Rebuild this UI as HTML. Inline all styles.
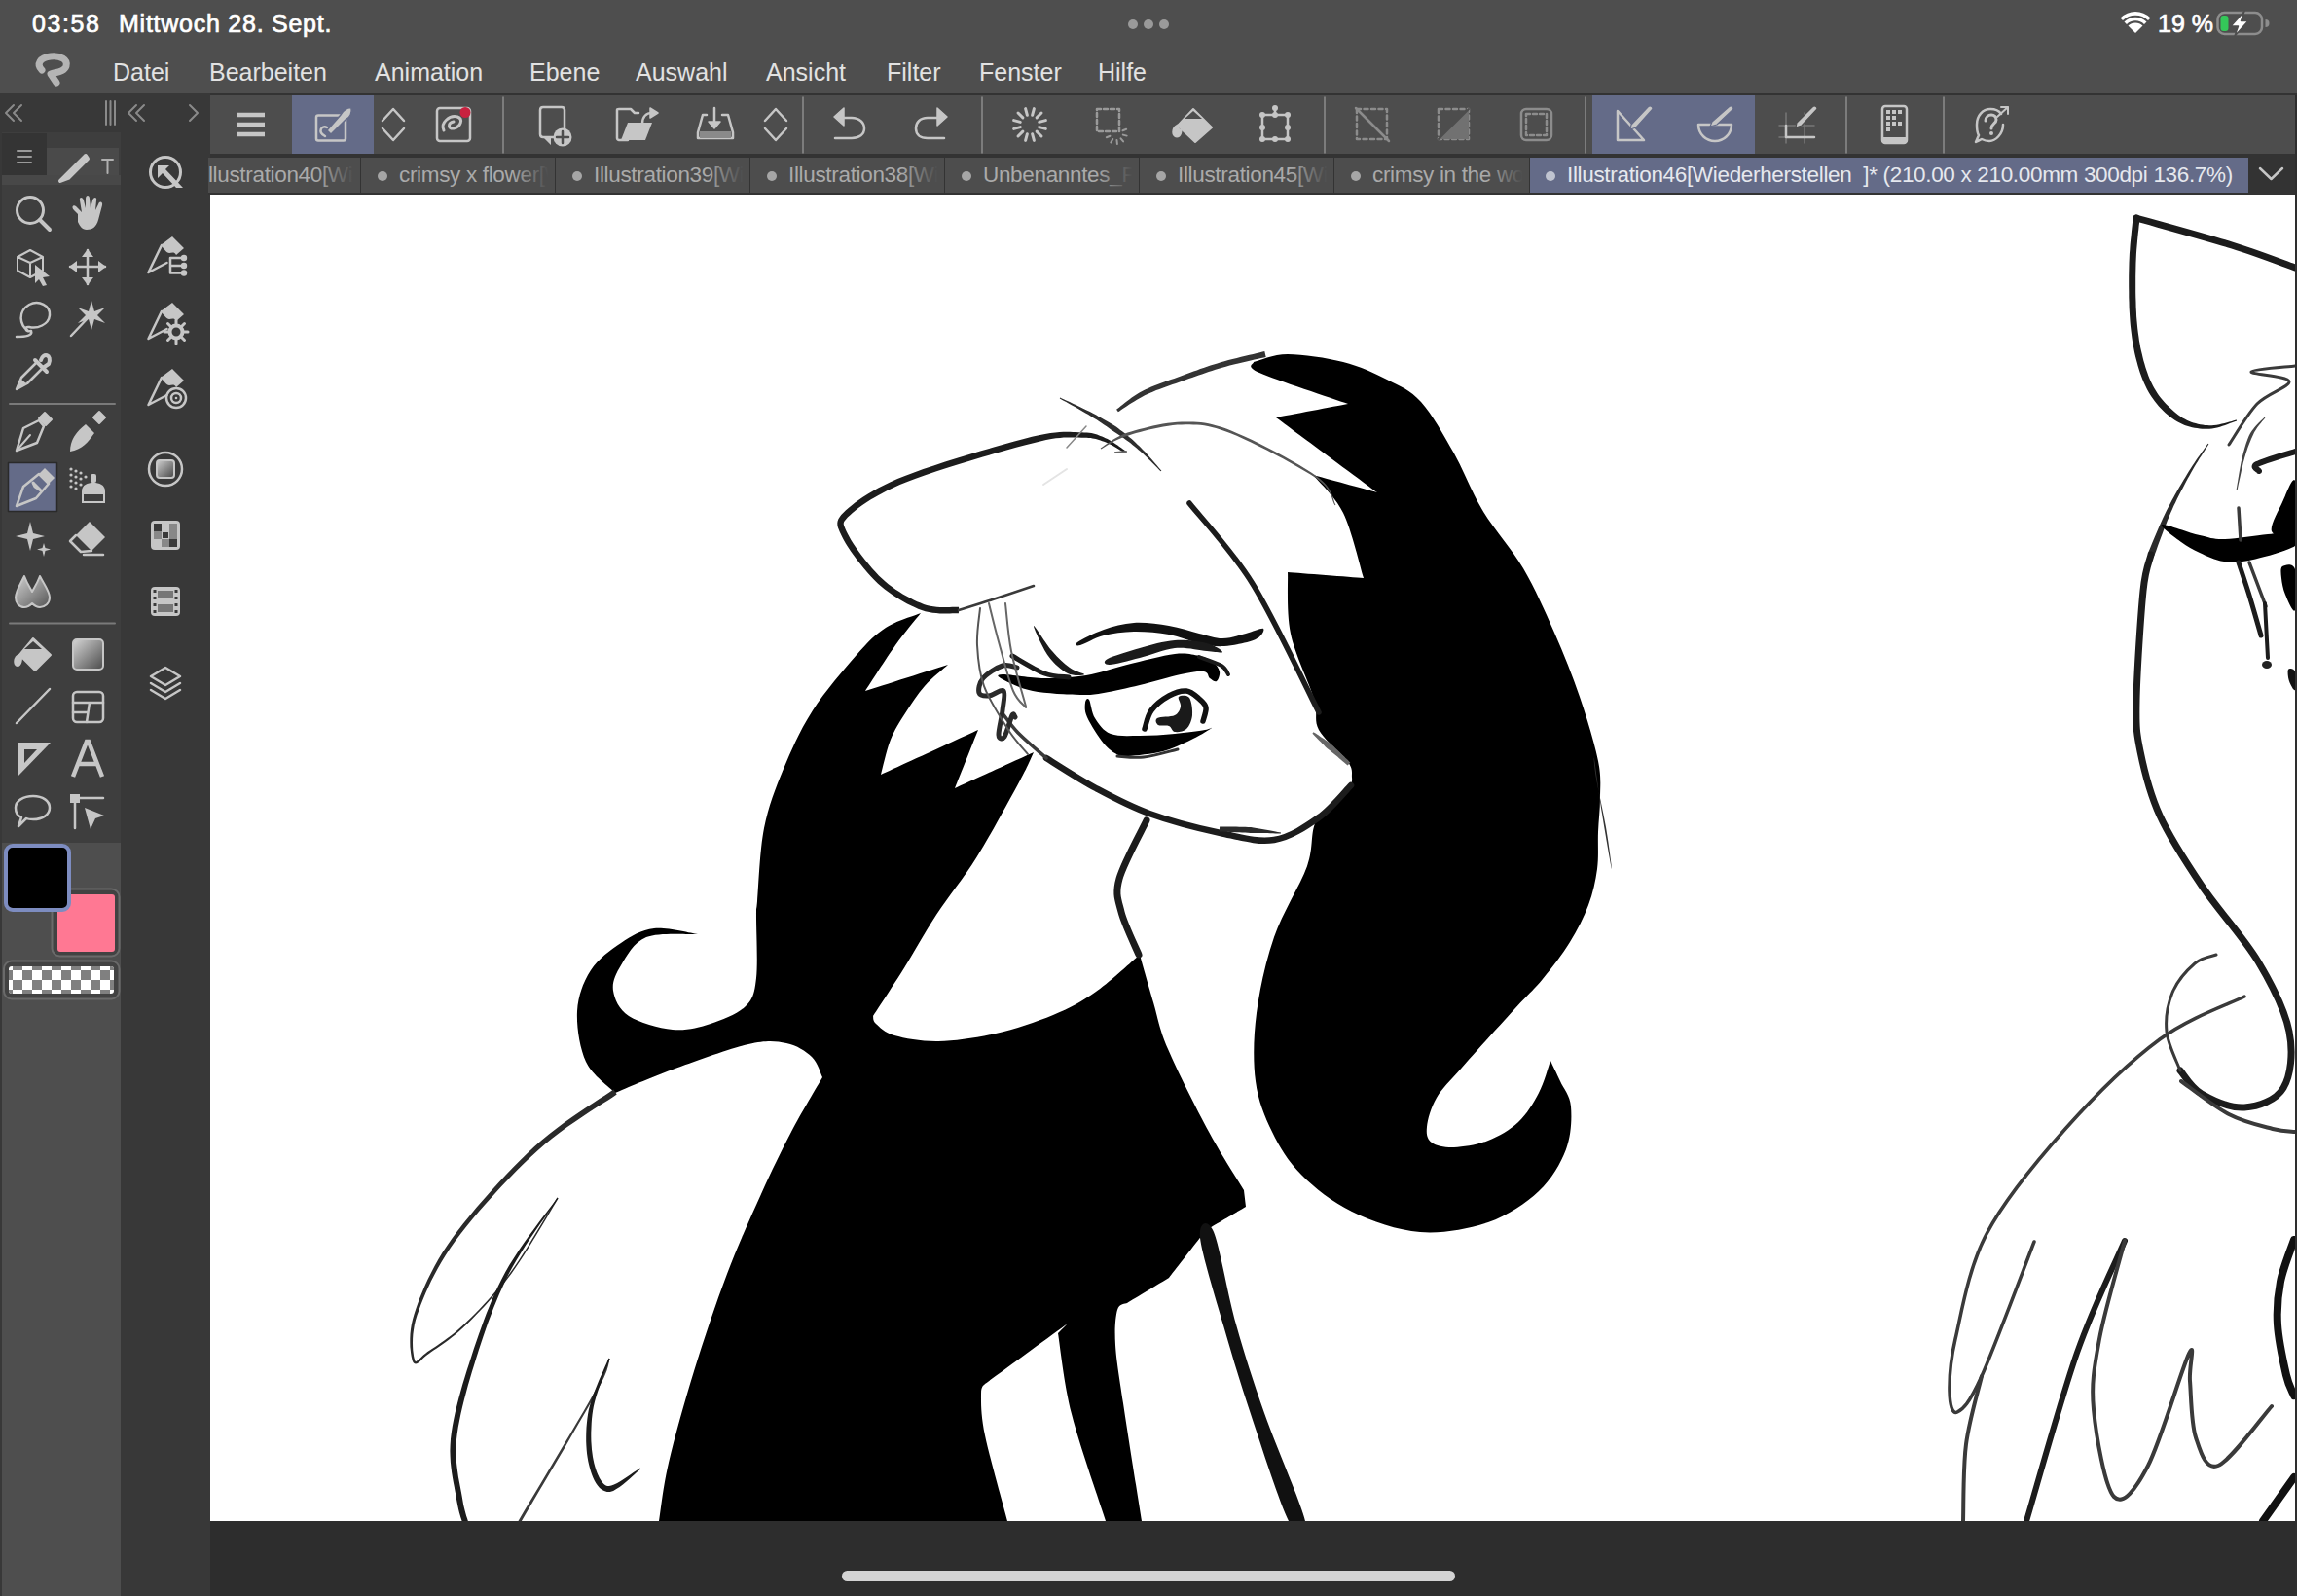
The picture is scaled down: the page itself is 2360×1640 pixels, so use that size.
<!DOCTYPE html>
<html><head><meta charset="utf-8">
<style>
html,body{margin:0;padding:0;width:2360px;height:1640px;overflow:hidden;background:#4e4e4e;font-family:"Liberation Sans",sans-serif;}
.a{position:absolute;}
.st{color:#fff;font-size:25px;top:10px;white-space:nowrap;-webkit-text-stroke:0.7px #fff;}
.mn{color:#e2e2e2;font-size:25px;top:60px;white-space:nowrap;}
.tab{position:absolute;top:162px;height:36px;background:#4d4d4d;overflow:hidden;white-space:nowrap;}
.tab .d{position:absolute;top:14px;width:10px;height:10px;border-radius:50%;background:#a6a6a6;left:17px;}
.tab .t{position:absolute;left:39px;top:5px;font-size:22.5px;color:#aaaaaa;letter-spacing:-0.33px;}
.tab .f{position:absolute;right:0;top:0;width:44px;height:36px;background:linear-gradient(to right,rgba(77,77,77,0),#4d4d4d 85%);}
</style></head><body>
<!-- status bar -->
<div class="a st" style="left:33px;letter-spacing:1.6px;">03:58</div>
<div class="a st" style="left:122px;letter-spacing:0.75px;">Mittwoch 28. Sept.</div>
<div class="a st" style="left:2217px;">19 %</div>
<!-- menu -->
<div class="a mn" style="left:116px;">Datei</div>
<div class="a mn" style="left:215px;">Bearbeiten</div>
<div class="a mn" style="left:385px;">Animation</div>
<div class="a mn" style="left:544px;">Ebene</div>
<div class="a mn" style="left:653px;">Auswahl</div>
<div class="a mn" style="left:787px;">Ansicht</div>
<div class="a mn" style="left:911px;">Filter</div>
<div class="a mn" style="left:1006px;">Fenster</div>
<div class="a mn" style="left:1128px;">Hilfe</div>

<!-- frame regions -->
<div class="a" style="left:0;top:96px;width:2360px;height:2px;background:#333;"></div>
<div class="a" style="left:0;top:96px;width:216px;height:1544px;background:#383838;"></div>
<div class="a" style="left:2px;top:136px;width:122px;height:730px;background:#3e3e3e;"></div>
<div class="a" style="left:2px;top:137px;width:46px;height:43px;background:#343434;"></div>
<div class="a" style="left:48px;top:152px;width:74px;height:38px;background:#4a4a4a;"></div>
<div class="a" style="left:2px;top:180px;width:122px;height:10px;background:#484848;"></div>
<div class="a" style="left:2px;top:866px;width:122px;height:774px;background:#4e4e4e;"></div>
<!-- toolbar -->
<div class="a" style="left:216px;top:98px;width:2144px;height:64px;background:#333;"></div>
<div class="a" style="left:216px;top:98px;width:2142px;height:60px;background:#4d4d4d;"></div>
<div class="a" style="left:300px;top:98px;width:84px;height:60px;background:#646b88;"></div>
<div class="a" style="left:1636px;top:98px;width:167px;height:60px;background:#646b88;"></div>
<!-- tabbar -->
<div class="a" style="left:214px;top:162px;width:2146px;height:38px;background:#333;"></div>
<div class="tab" style="left:214px;width:156px;"><div class="t" style="left:-6px;">Illustration40[Wiederherstellen</div><div class="f"></div></div>
<div class="tab" style="left:371px;width:199px;"><div class="d" style="left:17px"></div><div class="t">crimsy x flower[Wiederherstellen</div><div class="f"></div></div>
<div class="tab" style="left:571px;width:199px;"><div class="d"></div><div class="t">Illustration39[Wiederherstellen</div><div class="f"></div></div>
<div class="tab" style="left:771px;width:199px;"><div class="d"></div><div class="t">Illustration38[Wiederherstellen</div><div class="f"></div></div>
<div class="tab" style="left:971px;width:199px;"><div class="d"></div><div class="t">Unbenanntes_Papier</div><div class="f"></div></div>
<div class="tab" style="left:1171px;width:199px;"><div class="d"></div><div class="t">Illustration45[Wiederherstellen</div><div class="f"></div></div>
<div class="tab" style="left:1371px;width:200px;"><div class="d"></div><div class="t">crimsy in the woods</div><div class="f"></div></div>
<div class="tab" style="left:1572px;width:738px;background:#646b88;"><div class="d" style="background:#c0c4d0;left:16px"></div><div class="t" style="color:#e6e8ee;left:38px;">Illustration46[Wiederherstellen&nbsp; ]* (210.00 x 210.00mm 300dpi 136.7%)</div></div>
<!-- canvas -->
<div class="a" style="left:216px;top:200px;width:2142px;height:1363px;background:#fff;"></div>
<div class="a" style="left:216px;top:1563px;width:2144px;height:77px;background:#2d2d2d;"></div>
<div class="a" style="left:2358px;top:98px;width:2px;height:1542px;background:#2e2e2e;"></div>
<div class="a" style="left:865px;top:1614px;width:630px;height:11px;border-radius:6px;background:#d3d3d3;"></div>

<!-- DRAWING -->
<svg class="a" style="left:0;top:0;" width="2360" height="1640" viewBox="0 0 2360 1640">
<defs><clipPath id="cv"><rect x="216" y="200" width="2142" height="1363"/></clipPath></defs>
<g clip-path="url(#cv)">
<path d="M946.0,630.0 C941.7,635.5 929.5,649.7 920.0,663.0 C910.5,676.3 894.2,702.2 889.0,710.0 L889.0,710.0 C903.2,705.5 959.8,687.5 974.0,683.0 L974.0,683.0 C970.0,686.7 957.3,696.7 950.0,705.0 C942.7,713.3 935.8,723.8 930.0,733.0 C924.2,742.2 919.2,749.5 915.0,760.0 C910.8,770.5 906.7,790.0 905.0,796.0 L905.0,796.0 C921.7,788.3 988.3,757.7 1005.0,750.0 L1005.0,750.0 C1001.0,760.0 985.0,800.0 981.0,810.0 L981.0,810.0 C994.5,803.8 1048.5,779.2 1062.0,773.0 L1062.0,773.0 C1059.7,777.8 1057.7,784.2 1048.0,802.0 C1038.3,819.8 1018.3,857.0 1004.0,880.0 C989.7,903.0 974.3,921.2 962.0,940.0 C949.7,958.8 940.8,975.7 930.0,993.0 C919.2,1010.3 902.5,1035.5 897.0,1044.0 L897.0,1044.0 C897.5,1045.3 896.3,1048.7 900.0,1052.0 C903.7,1055.3 908.3,1061.0 919.0,1064.0 C929.7,1067.0 946.7,1070.3 964.0,1070.0 C981.3,1069.7 1003.3,1066.5 1023.0,1062.0 C1042.7,1057.5 1064.8,1050.2 1082.0,1043.0 C1099.2,1035.8 1111.2,1029.3 1126.0,1019.0 C1140.8,1008.7 1163.5,987.3 1171.0,981.0 L1171.0,981.0 C1173.3,989.2 1180.2,1013.8 1185.0,1030.0 C1189.8,1046.2 1190.5,1055.8 1200.0,1078.0 C1209.5,1100.2 1229.0,1138.8 1242.0,1163.0 C1255.0,1187.2 1272.0,1213.0 1278.0,1223.0 L1278.0,1223.0 C1278.3,1225.8 1279.7,1237.2 1280.0,1240.0 L1280.0,1240.0 C1273.2,1244.0 1245.8,1260.0 1239.0,1264.0 L1239.0,1264.0 C1232.7,1272.2 1207.3,1304.8 1201.0,1313.0 L1201.0,1313.0 C1193.8,1317.3 1165.2,1334.7 1158.0,1339.0 L1158.0,1339.0 C1156.3,1340.2 1150.0,1338.8 1148.0,1346.0 C1146.0,1353.2 1145.0,1366.0 1146.0,1382.0 C1147.0,1398.0 1149.5,1411.8 1154.0,1442.0 C1158.5,1472.2 1169.8,1542.8 1173.0,1563.0 L1173.0,1563.0 C1166.8,1563.0 1142.2,1563.0 1136.0,1563.0 L1136.0,1563.0 C1130.2,1544.7 1109.2,1485.2 1101.0,1453.0 C1092.8,1420.8 1089.3,1383.8 1087.0,1370.0 L1087.0,1370.0 C1088.7,1368.3 1095.3,1361.7 1097.0,1360.0 L1097.0,1360.0 C1082.8,1370.3 1026.2,1411.7 1012.0,1422.0 L1012.0,1422.0 C1011.3,1423.7 1008.0,1423.2 1008.0,1432.0 C1008.0,1440.8 1007.5,1453.2 1012.0,1475.0 C1016.5,1496.8 1031.2,1548.3 1035.0,1563.0 L1036.0,1563.0 C976.2,1563.0 736.8,1563.0 677.0,1563.0 L677.0,1563.0 C678.7,1553.0 681.0,1528.7 687.0,1503.0 C693.0,1477.3 703.0,1441.3 713.0,1409.0 C723.0,1376.7 735.5,1339.3 747.0,1309.0 C758.5,1278.7 771.0,1251.3 782.0,1227.0 C793.0,1202.7 802.5,1183.0 813.0,1163.0 C823.5,1143.0 839.7,1116.3 845.0,1107.0 L845.0,1107.0 C843.2,1103.5 840.2,1091.8 834.0,1086.0 C827.8,1080.2 818.8,1074.2 808.0,1072.0 C797.2,1069.8 788.5,1068.5 769.0,1073.0 C749.5,1077.5 713.8,1090.7 691.0,1099.0 C668.2,1107.3 641.8,1119.0 632.0,1123.0 L632.0,1123.0 C627.0,1117.7 608.5,1105.0 602.0,1091.0 C595.5,1077.0 592.2,1054.7 593.0,1039.0 C593.8,1023.3 599.5,1008.7 607.0,997.0 C614.5,985.3 627.2,976.2 638.0,969.0 C648.8,961.8 658.8,955.5 672.0,954.0 C685.2,952.5 709.5,959.0 717.0,960.0 L717.0,960.0 C708.2,960.5 677.2,957.7 664.0,963.0 C650.8,968.3 643.7,982.8 638.0,992.0 C632.3,1001.2 628.7,1009.3 630.0,1018.0 C631.3,1026.7 635.8,1037.3 646.0,1044.0 C656.2,1050.7 677.0,1056.7 691.0,1058.0 C705.0,1059.3 717.5,1056.0 730.0,1052.0 C742.5,1048.0 758.2,1041.8 766.0,1034.0 C773.8,1026.2 775.2,1020.7 777.0,1005.0 C778.8,989.3 776.8,953.2 777.0,940.0 C777.2,926.8 776.7,940.8 778.0,926.0 C779.3,911.2 780.5,873.7 785.0,851.0 C789.5,828.3 796.7,810.2 805.0,790.0 C813.3,769.8 822.5,749.5 835.0,730.0 C847.5,710.5 867.5,687.2 880.0,673.0 C892.5,658.8 899.0,652.2 910.0,645.0 C921.0,637.8 940.0,632.5 946.0,630.0 Z" fill="#000"/>
<path d="M1288.0,372.0 C1293.8,370.7 1307.7,364.0 1323.0,364.0 C1338.3,364.0 1363.0,367.7 1380.0,372.0 C1397.0,376.3 1411.7,383.2 1425.0,390.0 C1438.3,396.8 1448.5,400.3 1460.0,413.0 C1471.5,425.7 1483.5,447.5 1494.0,466.0 C1504.5,484.5 1511.2,504.3 1523.0,524.0 C1534.8,543.7 1552.7,563.0 1565.0,584.0 C1577.3,605.0 1587.3,628.0 1597.0,650.0 C1606.7,672.0 1615.5,694.0 1623.0,716.0 C1630.5,738.0 1638.5,764.7 1642.0,782.0 C1645.5,799.3 1644.0,807.8 1644.0,820.0 C1644.0,832.2 1642.5,842.8 1642.0,855.0 C1641.5,867.2 1642.7,880.5 1641.0,893.0 C1639.3,905.5 1636.7,917.5 1632.0,930.0 C1627.3,942.5 1620.8,955.3 1613.0,968.0 C1605.2,980.7 1594.5,994.5 1585.0,1006.0 C1575.5,1017.5 1569.8,1021.8 1556.0,1037.0 C1542.2,1052.2 1515.3,1081.8 1502.0,1097.0 C1488.7,1112.2 1482.0,1117.8 1476.0,1128.0 C1470.0,1138.2 1466.8,1150.3 1466.0,1158.0 C1465.2,1165.7 1466.3,1170.5 1471.0,1174.0 C1475.7,1177.5 1484.3,1179.3 1494.0,1179.0 C1503.7,1178.7 1518.0,1176.3 1529.0,1172.0 C1540.0,1167.7 1551.3,1161.2 1560.0,1153.0 C1568.7,1144.8 1575.5,1133.5 1581.0,1123.0 C1586.5,1112.5 1591.0,1095.5 1593.0,1090.0 L1593.0,1090.0 C1594.7,1093.5 1599.5,1103.2 1603.0,1111.0 C1606.5,1118.8 1613.0,1125.3 1614.0,1137.0 C1615.0,1148.7 1614.5,1166.5 1609.0,1181.0 C1603.5,1195.5 1594.3,1211.5 1581.0,1224.0 C1567.7,1236.5 1549.3,1249.0 1529.0,1256.0 C1508.7,1263.0 1482.3,1267.8 1459.0,1266.0 C1435.7,1264.2 1409.3,1254.8 1389.0,1245.0 C1368.7,1235.2 1350.7,1220.7 1337.0,1207.0 C1323.3,1193.3 1314.8,1179.0 1307.0,1163.0 C1299.2,1147.0 1292.7,1131.3 1290.0,1111.0 C1287.3,1090.7 1287.8,1065.7 1291.0,1041.0 C1294.2,1016.3 1300.3,988.2 1309.0,963.0 C1317.7,937.8 1335.7,910.2 1343.0,890.0 C1350.3,869.8 1345.5,855.5 1353.0,842.0 C1360.5,828.5 1382.2,814.5 1388.0,809.0 L1388.0,809.0 C1388.2,807.3 1389.5,803.3 1389.0,799.0 C1388.5,794.7 1390.7,791.2 1385.0,783.0 C1379.3,774.8 1360.8,760.8 1355.0,750.0 C1349.2,739.2 1354.8,734.5 1350.0,718.0 C1345.2,701.5 1330.5,672.7 1326.0,651.0 C1321.5,629.3 1323.5,598.5 1323.0,588.0 L1323.0,588.0 C1336.0,589.0 1388.0,593.0 1401.0,594.0 L1401.0,594.0 C1397.5,582.8 1388.7,544.7 1380.0,527.0 C1371.3,509.3 1354.2,494.5 1349.0,488.0 L1349.0,488.0 C1360.0,491.0 1404.0,503.0 1415.0,506.0 L1415.0,506.0 C1397.7,493.2 1328.3,441.8 1311.0,429.0 L1311.0,429.0 C1323.3,426.7 1372.7,417.3 1385.0,415.0 L1385.0,415.0 C1369.8,409.7 1310.2,390.2 1294.0,383.0 C1277.8,375.8 1289.0,373.8 1288.0,372.0 Z" fill="#000"/>
<path d="M1157.5,464.1 L1156.5,463.5 L1155.2,462.6 L1153.7,461.5 L1152.1,460.3 L1150.2,459.0 L1148.3,457.6 L1146.2,456.2 L1144.1,454.8 L1142.0,453.5 L1139.9,452.2 L1137.8,451.1 L1135.8,450.2 L1133.9,449.3 L1132.2,448.6 L1130.5,447.9 L1128.8,447.2 L1127.1,446.6 L1125.3,446.0 L1123.4,445.5 L1121.4,445.1 L1119.1,444.8 L1116.7,444.6 L1114.0,444.4 L1111.0,444.3 L1108.1,444.3 L1105.2,444.1 L1102.3,444.0 L1099.3,443.8 L1096.0,443.8 L1092.5,443.8 L1088.6,444.0 L1084.2,444.4 L1079.2,445.0 L1073.7,446.0 L1067.3,447.2 L1060.2,448.8 L1051.9,451.0 L1042.3,453.6 L1031.6,456.5 L1020.1,459.8 L1008.0,463.3 L995.7,467.0 L983.3,470.8 L971.1,474.6 L959.4,478.4 L948.5,482.1 L938.5,485.7 L929.8,489.0 L922.1,492.1 L914.9,495.3 L908.3,498.5 L902.2,501.6 L896.5,504.7 L891.4,507.8 L886.6,510.8 L882.3,513.8 L878.4,516.6 L874.8,519.4 L871.7,522.1 L868.8,524.6 L866.3,527.0 L864.3,529.1 L862.7,531.2 L861.4,533.2 L860.6,535.4 L860.3,537.6 L860.4,539.8 L860.9,541.9 L861.7,544.1 L862.6,546.3 L863.8,548.7 L865.1,551.4 L866.8,554.7 L868.9,558.4 L871.3,562.3 L874.1,566.5 L877.2,570.8 L880.5,575.2 L883.9,579.6 L887.5,584.0 L891.1,588.2 L894.7,592.3 L898.3,596.0 L901.8,599.4 L905.3,602.5 L908.9,605.5 L912.7,608.3 L916.5,611.0 L920.4,613.6 L924.3,616.0 L928.2,618.3 L932.1,620.4 L935.9,622.3 L939.7,624.1 L943.3,625.7 L946.9,627.1 L950.6,628.2 L954.4,629.1 L958.2,629.7 L962.0,630.1 L965.6,630.4 L969.2,630.4 L972.6,630.4 L975.8,630.4 L978.6,630.3 L981.1,630.2 L983.2,630.2 L984.9,630.2 L985.1,623.8 L983.3,623.7 L981.0,623.7 L978.4,623.8 L975.6,623.9 L972.5,623.9 L969.3,623.9 L965.9,623.9 L962.5,623.7 L959.0,623.3 L955.6,622.7 L952.3,622.0 L949.1,620.9 L945.8,619.6 L942.3,618.2 L938.7,616.5 L935.1,614.6 L931.3,612.6 L927.6,610.5 L923.9,608.1 L920.2,605.7 L916.5,603.1 L913.0,600.4 L909.5,597.6 L906.2,594.6 L902.9,591.4 L899.5,587.8 L896.0,584.0 L892.5,579.8 L889.0,575.6 L885.7,571.3 L882.5,567.0 L879.5,562.8 L876.8,558.8 L874.4,555.0 L872.5,551.6 L870.9,548.6 L869.6,545.9 L868.5,543.6 L867.7,541.6 L867.1,540.1 L866.8,538.8 L866.7,537.9 L866.9,537.1 L867.2,536.1 L868.0,534.9 L869.2,533.4 L870.9,531.6 L873.2,529.4 L875.9,527.0 L878.9,524.4 L882.3,521.8 L886.1,519.1 L890.2,516.2 L894.8,513.3 L899.8,510.4 L905.2,507.4 L911.2,504.3 L917.6,501.2 L924.6,498.1 L932.2,495.0 L940.8,491.8 L950.6,488.3 L961.5,484.6 L973.1,480.8 L985.2,477.0 L997.6,473.2 L1009.9,469.6 L1021.9,466.0 L1033.4,462.8 L1044.0,459.8 L1053.6,457.3 L1061.8,455.2 L1068.8,453.5 L1074.9,452.1 L1080.2,451.1 L1084.9,450.3 L1089.1,449.9 L1092.8,449.6 L1096.1,449.4 L1099.2,449.4 L1102.1,449.5 L1105.0,449.6 L1107.9,449.6 L1111.0,449.7 L1113.8,449.7 L1116.4,449.7 L1118.6,449.9 L1120.6,450.1 L1122.5,450.4 L1124.2,450.7 L1125.8,451.1 L1127.4,451.5 L1129.0,452.0 L1130.6,452.6 L1132.4,453.2 L1134.2,453.8 L1136.2,454.6 L1138.2,455.5 L1140.3,456.5 L1142.5,457.6 L1144.6,458.8 L1146.7,460.0 L1148.8,461.2 L1150.7,462.4 L1152.4,463.5 L1154.0,464.4 L1155.4,465.2 L1156.5,465.9 Z" fill="#1c1c1c"/>
<path d="M985.0,627.0 C990.8,625.2 1007.2,620.2 1020.0,616.0 C1032.8,611.8 1055.0,604.3 1062.0,602.0" fill="none" stroke="#3a3a3a" stroke-width="2.5" stroke-linecap="round" stroke-linejoin="round"/>
<path d="M1148.9,423.2 L1150.2,422.4 L1151.8,421.3 L1153.6,420.1 L1155.6,418.7 L1157.9,417.2 L1160.3,415.6 L1162.8,414.0 L1165.4,412.4 L1168.1,410.8 L1170.8,409.2 L1173.5,407.7 L1176.1,406.3 L1178.9,404.9 L1181.8,403.7 L1184.8,402.4 L1188.0,401.1 L1191.2,399.9 L1194.5,398.7 L1197.9,397.5 L1201.3,396.3 L1204.7,395.1 L1208.1,393.9 L1211.5,392.7 L1214.9,391.5 L1218.3,390.3 L1221.6,389.1 L1224.9,387.9 L1228.3,386.7 L1231.7,385.5 L1235.0,384.4 L1238.4,383.2 L1241.8,382.0 L1245.3,380.9 L1248.8,379.8 L1252.3,378.8 L1255.8,377.7 L1259.5,376.7 L1263.5,375.6 L1267.7,374.6 L1272.1,373.5 L1276.4,372.5 L1280.7,371.5 L1284.9,370.5 L1288.8,369.6 L1292.5,368.8 L1295.7,368.1 L1298.5,367.4 L1300.7,366.9 L1299.3,361.1 L1297.1,361.6 L1294.4,362.3 L1291.2,363.0 L1287.5,363.9 L1283.6,364.8 L1279.4,365.8 L1275.1,366.8 L1270.7,367.9 L1266.3,369.0 L1262.1,370.1 L1258.0,371.2 L1254.2,372.3 L1250.6,373.4 L1247.1,374.5 L1243.6,375.6 L1240.1,376.8 L1236.6,378.0 L1233.2,379.1 L1229.8,380.4 L1226.4,381.6 L1223.1,382.8 L1219.7,384.0 L1216.4,385.3 L1213.1,386.5 L1209.7,387.7 L1206.4,388.9 L1203.0,390.1 L1199.5,391.3 L1196.1,392.6 L1192.7,393.8 L1189.4,395.1 L1186.1,396.3 L1182.9,397.6 L1179.8,399.0 L1176.8,400.3 L1173.9,401.7 L1171.0,403.2 L1168.2,404.9 L1165.5,406.7 L1162.8,408.5 L1160.3,410.4 L1157.9,412.3 L1155.6,414.1 L1153.5,415.8 L1151.5,417.3 L1149.8,418.7 L1148.4,419.8 L1147.1,420.8 Z" fill="#333"/>
<path d="M1088.8,409.4 L1090.5,410.4 L1092.7,411.7 L1095.3,413.1 L1098.2,414.7 L1101.3,416.5 L1104.7,418.3 L1108.1,420.2 L1111.5,422.2 L1114.9,424.2 L1118.2,426.1 L1121.2,427.9 L1124.0,429.7 L1126.7,431.3 L1129.2,433.0 L1131.8,434.7 L1134.3,436.4 L1136.7,438.1 L1139.1,439.8 L1141.4,441.4 L1143.7,443.1 L1146.0,444.6 L1148.3,446.0 L1150.5,447.5 L1152.6,448.9 L1154.6,450.3 L1156.5,451.7 L1158.3,453.0 L1160.1,454.3 L1161.8,455.6 L1163.4,456.9 L1165.0,458.2 L1166.6,459.5 L1168.1,460.8 L1169.7,462.2 L1171.3,463.6 L1173.0,465.1 L1174.7,466.6 L1176.5,468.3 L1178.4,470.1 L1180.3,471.9 L1182.2,473.8 L1184.1,475.7 L1185.9,477.5 L1187.6,479.2 L1189.1,480.8 L1190.5,482.2 L1191.7,483.4 L1192.6,484.3 L1193.4,483.7 L1192.5,482.7 L1191.4,481.4 L1190.1,479.9 L1188.7,478.2 L1187.1,476.4 L1185.4,474.4 L1183.7,472.4 L1181.9,470.4 L1180.1,468.4 L1178.4,466.5 L1176.6,464.6 L1175.0,462.9 L1173.5,461.4 L1171.9,459.8 L1170.4,458.3 L1168.9,456.9 L1167.4,455.4 L1165.9,454.0 L1164.3,452.6 L1162.7,451.1 L1161.0,449.7 L1159.2,448.2 L1157.4,446.6 L1155.4,445.1 L1153.4,443.5 L1151.2,441.9 L1149.1,440.2 L1146.8,438.5 L1144.4,437.0 L1141.9,435.5 L1139.4,434.0 L1136.8,432.4 L1134.1,430.9 L1131.5,429.4 L1128.7,427.9 L1126.0,426.3 L1123.0,424.8 L1119.8,423.1 L1116.4,421.4 L1112.8,419.7 L1109.3,418.0 L1105.7,416.3 L1102.3,414.7 L1099.0,413.1 L1096.0,411.7 L1093.3,410.5 L1091.0,409.4 L1089.2,408.6 Z" fill="#2e2e2e"/>
<path d="M1131.3,461.4 L1132.6,460.7 L1134.1,459.8 L1135.8,458.8 L1137.7,457.6 L1139.8,456.3 L1142.1,455.0 L1144.5,453.6 L1147.2,452.3 L1150.0,451.0 L1153.0,449.7 L1156.2,448.6 L1159.5,447.4 L1163.1,446.3 L1167.1,445.1 L1171.3,443.9 L1175.8,442.7 L1180.5,441.5 L1185.4,440.4 L1190.3,439.4 L1195.2,438.5 L1200.1,437.7 L1204.9,437.1 L1209.6,436.6 L1214.0,436.4 L1218.3,436.3 L1222.3,436.3 L1226.1,436.4 L1229.9,436.5 L1233.6,436.8 L1237.3,437.3 L1241.1,438.0 L1245.2,438.9 L1249.4,440.0 L1254.0,441.4 L1259.0,443.2 L1264.5,445.3 L1270.7,447.8 L1277.6,450.9 L1285.2,454.5 L1293.2,458.4 L1301.5,462.6 L1309.8,466.9 L1318.1,471.3 L1326.0,475.7 L1333.5,479.9 L1340.4,483.9 L1346.4,487.5 L1351.4,490.8 L1355.5,493.8 L1358.8,496.8 L1361.6,499.6 L1363.8,502.4 L1365.5,505.1 L1366.8,507.7 L1367.9,510.1 L1368.7,512.3 L1369.4,514.4 L1370.1,516.2 L1370.8,517.9 L1371.6,519.2 L1372.4,518.8 L1371.7,517.4 L1371.1,515.9 L1370.5,514.0 L1369.9,511.9 L1369.1,509.6 L1368.0,507.1 L1366.7,504.4 L1365.0,501.6 L1362.8,498.6 L1360.0,495.5 L1356.7,492.4 L1352.6,489.2 L1347.6,485.7 L1341.6,481.9 L1334.7,477.7 L1327.2,473.5 L1319.3,469.0 L1311.0,464.6 L1302.7,460.2 L1294.4,456.0 L1286.4,452.1 L1278.7,448.5 L1271.7,445.4 L1265.5,442.7 L1260.0,440.6 L1254.9,438.8 L1250.2,437.4 L1245.8,436.2 L1241.7,435.3 L1237.7,434.6 L1233.9,434.1 L1230.1,433.8 L1226.2,433.6 L1222.3,433.5 L1218.3,433.5 L1214.0,433.6 L1209.4,433.8 L1204.6,434.2 L1199.7,434.8 L1194.7,435.6 L1189.7,436.5 L1184.7,437.6 L1179.9,438.7 L1175.1,439.9 L1170.6,441.1 L1166.2,442.3 L1162.2,443.5 L1158.5,444.6 L1155.1,445.8 L1151.9,447.2 L1148.9,448.7 L1146.1,450.2 L1143.5,451.8 L1141.1,453.4 L1138.8,454.9 L1136.8,456.3 L1135.0,457.6 L1133.4,458.8 L1132.0,459.8 L1130.7,460.6 Z" fill="#555"/>
<path d="M1222.0,517.0 C1232.8,530.8 1264.8,564.2 1287.0,600.0 C1309.2,635.8 1343.7,710.0 1355.0,732.0" fill="none" stroke="#1c1c1c" stroke-width="5.5" stroke-linecap="round" stroke-linejoin="round"/>
<path d="M1075.0,779.0 C1083.5,784.2 1108.3,800.5 1126.0,810.0 C1143.7,819.5 1159.7,828.3 1181.0,836.0 C1202.3,843.7 1232.7,851.5 1254.0,856.0 C1275.3,860.5 1292.2,865.7 1309.0,863.0 C1325.8,860.3 1341.8,849.3 1355.0,840.0 C1368.2,830.7 1382.5,812.5 1388.0,807.0" fill="none" stroke="#1c1c1c" stroke-width="6.5" stroke-linecap="round" stroke-linejoin="round"/>
<path d="M1030.0,733.0 C1032.7,736.3 1038.5,745.3 1046.0,753.0 C1053.5,760.7 1070.2,774.7 1075.0,779.0" fill="none" stroke="#3a3a3a" stroke-width="3.5" stroke-linecap="round" stroke-linejoin="round"/>
<path d="M1178.0,843.0 C1173.3,853.0 1154.3,887.3 1150.0,903.0 C1145.7,918.7 1148.7,924.0 1152.0,937.0 C1155.3,950.0 1167.0,973.7 1170.0,981.0" fill="none" stroke="#1c1c1c" stroke-width="7" stroke-linecap="round" stroke-linejoin="round"/>
<path d="M1252.9,854.5 L1254.5,854.6 L1256.4,854.6 L1258.7,854.7 L1261.3,854.8 L1264.1,854.9 L1267.0,855.0 L1270.0,855.2 L1273.1,855.3 L1276.2,855.5 L1279.2,855.6 L1282.1,855.8 L1284.8,856.0 L1287.5,855.9 L1290.4,855.9 L1293.3,856.0 L1296.4,856.0 L1299.4,856.1 L1302.3,856.1 L1305.2,856.2 L1307.9,856.3 L1310.4,856.4 L1312.6,856.4 L1314.4,856.5 L1315.9,856.5 L1316.1,855.5 L1314.6,855.2 L1312.7,854.9 L1310.6,854.5 L1308.1,854.0 L1305.5,853.5 L1302.7,853.0 L1299.7,852.5 L1296.8,851.9 L1293.8,851.4 L1290.8,850.9 L1287.9,850.4 L1285.2,850.0 L1282.4,849.9 L1279.5,849.8 L1276.4,849.7 L1273.3,849.7 L1270.2,849.6 L1267.1,849.6 L1264.2,849.6 L1261.4,849.6 L1258.8,849.5 L1256.5,849.5 L1254.6,849.5 L1253.1,849.5 Z" fill="#2a2a2a"/>
<path d="M1096.0,460.0 C1099.3,456.3 1112.7,441.7 1116.0,438.0" fill="none" stroke="#888" stroke-width="1.5" stroke-linecap="round" stroke-linejoin="round"/>
<path d="M1146.0,465.0 C1147.8,464.8 1155.2,464.2 1157.0,464.0" fill="none" stroke="#666" stroke-width="2" stroke-linecap="round" stroke-linejoin="round"/>
<path d="M1072.0,498.0 C1076.0,495.3 1092.0,484.7 1096.0,482.0" fill="none" stroke="#e4e4e4" stroke-width="2" stroke-linecap="round" stroke-linejoin="round"/>
<path d="M1107.0,660.0 C1111.0,657.3 1124.3,650.3 1134.0,647.0 C1143.7,643.7 1153.8,640.7 1165.0,640.0 C1176.2,639.3 1189.8,641.2 1201.0,643.0 C1212.2,644.8 1222.8,648.8 1232.0,651.0 C1241.2,653.2 1248.0,656.0 1256.0,656.0 C1264.0,656.0 1273.0,652.7 1280.0,651.0 C1287.0,649.3 1296.3,645.0 1298.0,646.0 C1299.7,647.0 1296.7,654.0 1290.0,657.0 C1283.3,660.0 1267.7,663.3 1258.0,664.0 C1248.3,664.7 1241.5,663.0 1232.0,661.0 C1222.5,659.0 1212.2,654.0 1201.0,652.0 C1189.8,650.0 1176.2,648.8 1165.0,649.0 C1153.8,649.2 1143.2,650.7 1134.0,653.0 C1124.8,655.3 1114.5,661.8 1110.0,663.0 C1105.5,664.2 1103.0,662.7 1107.0,660.0 Z" fill="#111"/>
<path d="M1138.0,677.0 C1143.2,674.2 1159.5,669.2 1171.0,666.0 C1182.5,662.8 1195.5,658.8 1207.0,658.0 C1218.5,657.2 1231.8,659.0 1240.0,661.0 C1248.2,663.0 1256.0,668.7 1256.0,670.0 C1256.0,671.3 1248.2,669.7 1240.0,669.0 C1231.8,668.3 1218.5,664.8 1207.0,666.0 C1195.5,667.2 1182.2,673.2 1171.0,676.0 C1159.8,678.8 1145.5,682.8 1140.0,683.0 C1134.5,683.2 1132.8,679.8 1138.0,677.0 Z" fill="#1a1a1a"/>
<path d="M1030.0,693.0 C1037.2,692.8 1058.7,696.8 1073.0,697.0 C1087.3,697.2 1101.8,696.3 1116.0,694.0 C1130.2,691.7 1142.8,686.7 1158.0,683.0 C1173.2,679.3 1194.7,673.5 1207.0,672.0 C1219.3,670.5 1225.5,672.7 1232.0,674.0 C1238.5,675.3 1242.5,677.3 1246.0,680.0 C1249.5,682.7 1252.3,686.7 1253.0,690.0 C1253.7,693.3 1251.7,698.8 1250.0,700.0 C1248.3,701.2 1245.2,698.7 1243.0,697.0 C1240.8,695.3 1242.0,690.7 1237.0,690.0 C1232.0,689.3 1224.0,690.7 1213.0,693.0 C1202.0,695.3 1184.2,700.8 1171.0,704.0 C1157.8,707.2 1144.2,710.3 1134.0,712.0 C1123.8,713.7 1122.2,714.3 1110.0,714.0 C1097.8,713.7 1074.3,712.7 1061.0,710.0 C1047.7,707.3 1035.2,700.8 1030.0,698.0 C1024.8,695.2 1022.8,693.2 1030.0,693.0 Z" fill="#000"/>
<path d="M1232.0,675.0 C1235.8,676.5 1250.0,681.0 1255.0,684.0 C1260.0,687.0 1260.8,691.5 1262.0,693.0" fill="none" stroke="#1a1a1a" stroke-width="4" stroke-linecap="round" stroke-linejoin="round"/>
<path d="M1062.0,643.0 C1062.7,642.2 1074.8,661.8 1081.0,669.0 C1087.2,676.2 1093.5,682.0 1099.0,686.0 C1104.5,690.0 1114.3,692.0 1114.0,693.0 C1113.7,694.0 1103.2,695.2 1097.0,692.0 C1090.8,688.8 1082.8,682.2 1077.0,674.0 C1071.2,665.8 1061.3,643.8 1062.0,643.0 Z" fill="#1a1a1a"/>
<path d="M1040.0,674.0 C1045.5,677.0 1063.3,688.3 1073.0,692.0 C1082.7,695.7 1093.8,695.3 1098.0,696.0" fill="none" stroke="#1a1a1a" stroke-width="5" stroke-linecap="round" stroke-linejoin="round"/>
<path d="M1119.0,719.0 C1120.7,721.7 1121.3,732.2 1125.0,738.0 C1128.7,743.8 1133.3,751.0 1141.0,754.0 C1148.7,757.0 1160.0,756.0 1171.0,756.0 C1182.0,756.0 1195.8,755.0 1207.0,754.0 C1218.2,753.0 1231.7,751.0 1238.0,750.0 C1244.3,749.0 1247.0,746.5 1245.0,748.0 C1243.0,749.5 1234.3,755.0 1226.0,759.0 C1217.7,763.0 1206.2,769.0 1195.0,772.0 C1183.8,775.0 1166.7,776.3 1159.0,777.0 C1151.3,777.7 1153.2,778.2 1149.0,776.0 C1144.8,773.8 1139.3,770.5 1134.0,764.0 C1128.7,757.5 1120.2,744.0 1117.0,737.0 C1113.8,730.0 1114.7,725.0 1115.0,722.0 C1115.3,719.0 1117.3,716.3 1119.0,719.0 Z" fill="#000"/>
<path d="M1148.0,777.0 C1152.5,777.2 1164.7,779.2 1175.0,778.0 C1185.3,776.8 1204.2,771.3 1210.0,770.0" fill="none" stroke="#333" stroke-width="3" stroke-linecap="round" stroke-linejoin="round"/>
<path d="M1176.0,749.0 C1177.2,745.8 1178.8,735.7 1183.0,730.0 C1187.2,724.3 1195.0,718.3 1201.0,715.0 C1207.0,711.7 1213.8,709.5 1219.0,710.0 C1224.2,710.5 1228.7,715.2 1232.0,718.0 C1235.3,720.8 1238.3,723.2 1239.0,727.0 C1239.7,730.8 1236.5,738.7 1236.0,741.0" fill="none" stroke="#111" stroke-width="5.5" stroke-linecap="round" stroke-linejoin="round"/>
<path d="M1189.0,738.0 C1191.8,736.3 1203.0,737.0 1207.0,735.0 C1211.0,733.0 1212.3,729.2 1213.0,726.0 C1213.7,722.8 1209.5,717.5 1211.0,716.0 C1212.5,714.5 1219.7,713.8 1222.0,717.0 C1224.3,720.2 1225.5,729.7 1225.0,735.0 C1224.5,740.3 1222.0,746.2 1219.0,749.0 C1216.0,751.8 1210.0,752.5 1207.0,752.0 C1204.0,751.5 1203.8,747.2 1201.0,746.0 C1198.2,744.8 1192.0,746.3 1190.0,745.0 C1188.0,743.7 1186.2,739.7 1189.0,738.0 Z" fill="#1a1a1a"/>
<path d="M1045.0,686.0 C1042.5,685.7 1035.8,682.2 1030.0,684.0 C1024.2,685.8 1014.0,692.3 1010.0,697.0 C1006.0,701.7 1005.0,709.0 1006.0,712.0 C1007.0,715.0 1011.8,715.3 1016.0,715.0 C1020.2,714.7 1028.7,707.5 1031.0,710.0 C1033.3,712.5 1030.8,722.5 1030.0,730.0 C1029.2,737.5 1025.7,750.5 1026.0,755.0 C1026.3,759.5 1029.7,760.3 1032.0,757.0 C1034.3,753.7 1038.2,738.3 1040.0,735.0 C1041.8,731.7 1042.5,736.7 1043.0,737.0" fill="none" stroke="#2a2a2a" stroke-width="5" stroke-linecap="round" stroke-linejoin="round"/>
<path d="M1007.0,625.0 C1006.5,631.3 1003.3,649.7 1004.0,663.0 C1004.7,676.3 1005.7,690.5 1011.0,705.0 C1016.3,719.5 1028.5,738.3 1036.0,750.0 C1043.5,761.7 1052.7,770.8 1056.0,775.0" fill="none" stroke="#555" stroke-width="2" stroke-linecap="round" stroke-linejoin="round"/>
<path d="M1016.0,620.0 C1017.8,627.2 1022.8,648.0 1027.0,663.0 C1031.2,678.0 1036.5,699.3 1041.0,710.0 C1045.5,720.7 1051.8,724.2 1054.0,727.0" fill="none" stroke="#666" stroke-width="2" stroke-linecap="round" stroke-linejoin="round"/>
<path d="M1033.0,620.0 C1034.0,628.2 1035.5,651.3 1039.0,669.0 C1042.5,686.7 1051.5,716.5 1054.0,726.0" fill="none" stroke="#666" stroke-width="2" stroke-linecap="round" stroke-linejoin="round"/>
<path d="M1348.4,753.8 L1349.2,754.6 L1350.1,755.6 L1351.3,756.7 L1352.6,758.1 L1354.0,759.5 L1355.5,761.0 L1357.1,762.6 L1358.7,764.2 L1360.3,765.8 L1361.8,767.5 L1363.5,768.9 L1365.1,770.2 L1366.8,771.5 L1368.5,773.0 L1370.4,774.5 L1372.3,776.1 L1374.2,777.6 L1376.0,779.2 L1377.8,780.7 L1379.5,782.2 L1381.1,783.5 L1382.5,784.7 L1383.7,785.7 L1384.7,786.5 L1387.3,783.5 L1386.4,782.7 L1385.3,781.6 L1384.0,780.3 L1382.5,778.9 L1380.9,777.3 L1379.2,775.7 L1377.5,774.0 L1375.7,772.2 L1373.9,770.5 L1372.1,768.9 L1370.5,767.3 L1368.9,765.8 L1367.3,764.4 L1365.6,763.0 L1363.8,761.7 L1361.9,760.4 L1360.0,759.1 L1358.1,757.9 L1356.3,756.7 L1354.7,755.6 L1353.1,754.5 L1351.7,753.6 L1350.6,752.9 L1349.6,752.2 Z" fill="#666"/>
<path d="M1638.0,780.0 C1639.0,786.0 1643.0,817.2 1646.0,836.0 C1649.0,854.8 1655.3,890.7 1656.0,893.0 C1656.7,895.3 1652.7,865.5 1650.0,850.0 C1647.3,834.5 1642.0,811.7 1640.0,800.0 C1638.0,788.3 1637.0,774.0 1638.0,780.0 Z" fill="#333"/>
<path d="M630.3,1119.5 L626.4,1122.2 L621.6,1125.4 L615.9,1129.1 L609.6,1133.3 L602.6,1137.8 L595.2,1142.8 L587.5,1148.0 L579.7,1153.6 L571.8,1159.4 L564.0,1165.5 L556.4,1171.7 L549.2,1178.1 L542.1,1184.8 L534.7,1192.0 L527.2,1199.6 L519.5,1207.6 L511.8,1215.8 L504.1,1224.2 L496.6,1232.7 L489.3,1241.1 L482.4,1249.4 L475.8,1257.5 L469.8,1265.3 L464.3,1272.7 L459.3,1279.9 L454.6,1287.1 L450.4,1294.1 L446.5,1301.1 L442.9,1307.9 L439.6,1314.6 L436.6,1321.1 L433.9,1327.5 L431.4,1333.6 L429.2,1339.5 L427.3,1345.1 L425.5,1350.5 L424.0,1355.7 L422.8,1360.9 L422.0,1365.9 L421.5,1370.8 L421.3,1375.4 L421.3,1379.8 L421.4,1383.9 L421.8,1387.6 L422.2,1391.0 L422.7,1393.9 L423.3,1396.4 L423.8,1398.4 L424.5,1399.9 L425.5,1401.1 L426.9,1401.6 L428.3,1401.3 L429.6,1400.6 L430.8,1399.7 L432.1,1398.5 L433.5,1397.1 L435.0,1395.6 L436.7,1394.1 L438.6,1392.5 L440.7,1390.9 L443.0,1389.3 L445.5,1387.6 L448.3,1385.7 L451.2,1383.7 L454.4,1381.5 L457.6,1379.2 L461.0,1376.7 L464.4,1374.0 L468.0,1371.2 L471.5,1368.2 L475.1,1365.0 L478.6,1361.7 L482.2,1358.2 L485.9,1354.5 L489.7,1350.6 L493.6,1346.6 L497.5,1342.4 L501.5,1338.0 L505.5,1333.5 L509.5,1328.8 L513.5,1324.0 L517.6,1319.0 L521.6,1313.8 L525.6,1308.4 L529.7,1302.6 L534.1,1296.1 L538.7,1289.0 L543.3,1281.7 L548.0,1274.1 L552.6,1266.6 L557.0,1259.2 L561.2,1252.2 L565.0,1245.8 L568.4,1240.0 L571.3,1235.2 L573.6,1231.4 L572.4,1230.6 L570.0,1234.4 L567.1,1239.3 L563.7,1245.0 L559.9,1251.5 L555.7,1258.5 L551.3,1265.8 L546.7,1273.3 L542.1,1280.9 L537.4,1288.2 L532.9,1295.3 L528.5,1301.8 L524.4,1307.6 L520.4,1312.9 L516.4,1318.0 L512.4,1323.0 L508.4,1327.8 L504.3,1332.5 L500.3,1337.0 L496.3,1341.3 L492.4,1345.4 L488.5,1349.4 L484.7,1353.2 L481.0,1356.8 L477.4,1360.3 L473.8,1363.6 L470.2,1366.7 L466.7,1369.7 L463.2,1372.4 L459.7,1375.0 L456.4,1377.5 L453.1,1379.7 L450.0,1381.9 L447.1,1383.9 L444.3,1385.7 L441.7,1387.5 L439.3,1389.1 L437.2,1390.7 L435.2,1392.3 L433.4,1393.9 L431.9,1395.4 L430.4,1396.7 L429.2,1397.8 L428.2,1398.6 L427.4,1399.1 L427.1,1399.2 L427.0,1399.1 L426.6,1398.7 L426.2,1397.6 L425.6,1395.8 L425.1,1393.5 L424.7,1390.6 L424.3,1387.4 L424.1,1383.8 L424.0,1379.8 L424.1,1375.5 L424.4,1371.1 L425.0,1366.4 L425.8,1361.5 L427.0,1356.5 L428.5,1351.5 L430.4,1346.2 L432.4,1340.7 L434.7,1334.9 L437.2,1328.9 L440.0,1322.7 L443.0,1316.3 L446.4,1309.7 L450.0,1303.0 L453.9,1296.2 L458.2,1289.3 L462.8,1282.3 L467.7,1275.3 L473.2,1268.0 L479.3,1260.3 L485.8,1252.3 L492.8,1244.1 L500.1,1235.8 L507.6,1227.4 L515.3,1219.1 L523.0,1211.0 L530.7,1203.1 L538.3,1195.6 L545.7,1188.5 L552.8,1181.9 L559.9,1175.8 L567.3,1169.7 L575.1,1163.8 L582.9,1158.1 L590.7,1152.7 L598.4,1147.5 L605.8,1142.6 L612.7,1138.1 L619.1,1134.0 L624.9,1130.4 L629.8,1127.2 L633.7,1124.5 Z" fill="#2a2a2a"/>
<path d="M572.6,1230.7 L570.0,1234.4 L566.6,1238.9 L562.6,1244.2 L558.1,1250.1 L553.3,1256.6 L548.2,1263.5 L543.0,1270.6 L537.7,1278.0 L532.6,1285.5 L527.8,1292.9 L523.3,1300.1 L519.3,1307.1 L515.6,1313.9 L512.1,1320.9 L508.8,1328.0 L505.7,1335.1 L502.7,1342.4 L499.8,1349.6 L497.0,1356.9 L494.4,1364.2 L491.8,1371.5 L489.3,1378.8 L486.8,1386.0 L484.5,1393.2 L482.2,1400.4 L479.8,1407.7 L477.6,1415.1 L475.3,1422.5 L473.2,1430.0 L471.2,1437.3 L469.3,1444.7 L467.6,1451.8 L466.1,1458.9 L464.8,1465.7 L463.8,1472.3 L463.0,1478.7 L462.6,1484.9 L462.4,1490.9 L462.6,1496.8 L462.9,1502.5 L463.5,1508.0 L464.2,1513.4 L465.0,1518.5 L465.9,1523.4 L466.8,1528.1 L467.6,1532.5 L468.4,1536.6 L469.0,1540.5 L469.7,1544.2 L470.4,1547.8 L471.1,1551.1 L471.9,1554.2 L472.7,1557.0 L473.5,1559.7 L474.3,1562.1 L475.0,1564.3 L475.7,1566.3 L476.3,1568.0 L476.7,1569.5 L477.1,1570.8 L482.9,1569.2 L482.5,1567.8 L482.0,1566.2 L481.4,1564.4 L480.7,1562.4 L480.0,1560.3 L479.2,1557.9 L478.5,1555.4 L477.7,1552.6 L477.0,1549.7 L476.2,1546.5 L475.6,1543.1 L475.0,1539.5 L474.3,1535.6 L473.5,1531.3 L472.7,1526.9 L471.8,1522.3 L470.9,1517.5 L470.2,1512.5 L469.5,1507.3 L468.9,1502.0 L468.6,1496.5 L468.4,1490.9 L468.5,1485.2 L469.0,1479.3 L469.7,1473.2 L470.7,1466.7 L472.0,1460.0 L473.4,1453.1 L475.0,1446.0 L476.8,1438.8 L478.7,1431.5 L480.7,1424.1 L482.8,1416.7 L485.0,1409.3 L487.3,1402.0 L489.5,1394.8 L491.8,1387.6 L494.1,1380.4 L496.5,1373.2 L499.0,1365.9 L501.6,1358.6 L504.3,1351.4 L507.1,1344.1 L510.0,1336.9 L513.0,1329.8 L516.2,1322.8 L519.4,1315.8 L522.7,1308.9 L526.5,1302.0 L530.7,1294.7 L535.3,1287.2 L540.1,1279.6 L545.1,1272.1 L550.1,1264.8 L554.9,1257.8 L559.6,1251.2 L563.9,1245.1 L567.7,1239.7 L570.9,1235.0 L573.4,1231.3 Z" fill="#1c1c1c"/>
<path d="M531.3,1570.8 L535.4,1563.8 L540.8,1554.5 L547.3,1543.5 L554.6,1531.1 L562.5,1517.8 L570.6,1503.9 L578.9,1489.9 L586.9,1476.1 L594.4,1463.1 L601.3,1451.2 L607.2,1440.9 L611.9,1432.5 L615.4,1425.8 L618.3,1420.1 L620.5,1415.4 L622.2,1411.4 L623.5,1408.2 L624.3,1405.6 L624.9,1403.5 L625.3,1401.7 L625.6,1400.2 L625.9,1398.9 L626.2,1397.6 L626.7,1396.3 L625.3,1395.7 L624.8,1397.2 L624.4,1398.6 L624.1,1399.9 L623.8,1401.4 L623.4,1403.1 L622.8,1405.1 L621.9,1407.7 L620.7,1410.8 L618.9,1414.6 L616.7,1419.3 L613.8,1424.9 L610.1,1431.5 L605.4,1439.9 L599.5,1450.2 L592.5,1462.0 L584.9,1475.0 L576.8,1488.6 L568.5,1502.6 L560.2,1516.5 L552.3,1529.8 L544.9,1542.1 L538.3,1553.1 L532.9,1562.3 L528.7,1569.2 Z" fill="#3a3a3a"/>
<path d="M625.3,1395.7 L624.3,1398.3 L622.9,1401.4 L621.2,1405.2 L619.4,1409.4 L617.3,1413.9 L615.2,1418.8 L613.2,1423.8 L611.1,1428.9 L609.2,1434.0 L607.5,1439.1 L606.1,1444.0 L604.9,1448.6 L604.1,1453.1 L603.4,1457.7 L602.9,1462.4 L602.5,1467.1 L602.3,1471.8 L602.2,1476.5 L602.2,1481.1 L602.4,1485.6 L602.7,1489.9 L603.1,1494.0 L603.7,1497.9 L604.3,1501.6 L605.1,1505.0 L606.0,1508.5 L607.0,1511.9 L608.1,1515.2 L609.4,1518.4 L610.8,1521.4 L612.4,1524.2 L614.2,1526.7 L616.1,1528.9 L618.3,1530.8 L620.8,1532.1 L623.6,1533.0 L626.8,1532.9 L630.1,1531.9 L633.3,1530.1 L636.6,1528.0 L639.9,1525.5 L643.2,1522.8 L646.4,1520.0 L649.4,1517.3 L652.2,1514.8 L654.6,1512.5 L656.7,1510.7 L658.3,1509.4 L657.7,1508.6 L655.9,1509.7 L653.6,1511.2 L650.8,1513.1 L647.7,1515.3 L644.4,1517.5 L641.0,1519.8 L637.5,1522.0 L634.1,1523.9 L630.9,1525.4 L628.1,1526.4 L625.9,1527.0 L624.4,1527.0 L623.1,1526.7 L621.7,1525.9 L620.2,1524.7 L618.7,1523.1 L617.3,1521.1 L615.9,1518.7 L614.6,1516.1 L613.4,1513.2 L612.3,1510.2 L611.3,1507.0 L610.4,1503.7 L609.7,1500.4 L609.0,1497.0 L608.5,1493.3 L608.0,1489.4 L607.7,1485.2 L607.4,1480.9 L607.3,1476.5 L607.3,1472.0 L607.5,1467.4 L607.7,1462.8 L608.0,1458.2 L608.5,1453.8 L609.1,1449.4 L609.9,1444.9 L611.1,1440.1 L612.5,1435.1 L614.1,1430.0 L615.9,1424.8 L617.8,1419.7 L619.6,1414.8 L621.4,1410.2 L623.1,1405.9 L624.5,1402.1 L625.8,1398.9 L626.7,1396.3 Z" fill="#1c1c1c"/>
<path d="M1233.0,1272.0 C1234.7,1288.0 1248.3,1331.8 1257.0,1362.0 C1265.7,1392.2 1273.8,1419.5 1285.0,1453.0 C1296.2,1486.5 1314.7,1544.7 1324.0,1563.0 C1333.3,1581.3 1345.2,1581.5 1341.0,1563.0 C1336.8,1544.5 1310.8,1485.7 1299.0,1452.0 C1287.2,1418.3 1278.7,1392.0 1270.0,1361.0 C1261.3,1330.0 1253.2,1280.8 1247.0,1266.0 C1240.8,1251.2 1231.3,1256.0 1233.0,1272.0 Z" fill="#111"/>
<path d="M2358.0,275.0 C2347.2,271.2 2320.2,260.5 2293.0,252.0 C2265.8,243.5 2211.3,228.7 2195.0,224.0" fill="none" stroke="#1c1c1c" stroke-width="7" stroke-linecap="round" stroke-linejoin="round"/>
<path d="M2191.5,223.7 L2191.3,225.8 L2191.0,228.5 L2190.7,231.6 L2190.3,235.0 L2189.9,238.8 L2189.5,242.9 L2189.0,247.2 L2188.6,251.6 L2188.3,256.2 L2187.9,260.8 L2187.7,265.4 L2187.5,269.9 L2187.4,274.5 L2187.3,279.3 L2187.2,284.3 L2187.2,289.5 L2187.2,294.8 L2187.3,300.1 L2187.3,305.4 L2187.5,310.7 L2187.6,315.9 L2187.9,320.9 L2188.2,325.7 L2188.5,330.3 L2188.9,334.7 L2189.4,338.9 L2189.9,343.0 L2190.4,347.1 L2191.0,351.0 L2191.7,354.8 L2192.4,358.5 L2193.1,362.2 L2193.9,365.7 L2194.8,369.2 L2195.7,372.6 L2196.6,376.0 L2197.6,379.2 L2198.6,382.4 L2199.7,385.5 L2200.8,388.5 L2202.0,391.4 L2203.2,394.2 L2204.5,397.0 L2205.8,399.7 L2207.3,402.4 L2208.8,405.0 L2210.4,407.5 L2212.2,410.0 L2214.0,412.5 L2216.0,415.0 L2218.0,417.4 L2220.2,419.7 L2222.4,422.0 L2224.7,424.2 L2227.1,426.3 L2229.5,428.3 L2232.0,430.1 L2234.5,431.8 L2237.0,433.3 L2239.5,434.6 L2242.0,435.8 L2244.6,436.9 L2247.1,437.8 L2249.7,438.6 L2252.3,439.2 L2254.9,439.7 L2257.4,440.1 L2260.0,440.5 L2262.5,440.7 L2265.1,440.8 L2267.5,440.8 L2270.0,440.7 L2272.6,440.5 L2275.3,440.1 L2278.0,439.4 L2280.8,438.7 L2283.5,437.8 L2286.1,436.9 L2288.7,436.0 L2291.0,435.1 L2293.2,434.3 L2295.2,433.5 L2296.8,432.9 L2298.1,432.5 L2297.9,431.5 L2296.5,431.8 L2294.8,432.3 L2292.8,432.9 L2290.5,433.6 L2288.1,434.2 L2285.5,434.9 L2282.8,435.6 L2280.1,436.2 L2277.4,436.7 L2274.8,437.1 L2272.3,437.3 L2270.0,437.3 L2267.7,437.1 L2265.3,436.9 L2263.0,436.6 L2260.6,436.2 L2258.2,435.7 L2255.9,435.1 L2253.6,434.5 L2251.3,433.7 L2249.0,432.8 L2246.8,431.8 L2244.6,430.6 L2242.5,429.4 L2240.4,428.0 L2238.2,426.4 L2236.0,424.7 L2233.9,422.9 L2231.7,421.0 L2229.5,419.1 L2227.4,417.0 L2225.3,414.9 L2223.3,412.7 L2221.4,410.5 L2219.5,408.2 L2217.8,406.0 L2216.3,403.7 L2214.8,401.3 L2213.4,398.9 L2212.0,396.5 L2210.8,394.0 L2209.6,391.4 L2208.4,388.7 L2207.3,386.0 L2206.3,383.1 L2205.3,380.2 L2204.3,377.2 L2203.4,374.0 L2202.4,370.8 L2201.6,367.5 L2200.8,364.1 L2200.0,360.7 L2199.2,357.2 L2198.6,353.6 L2197.9,349.9 L2197.4,346.1 L2196.8,342.1 L2196.3,338.1 L2195.9,334.0 L2195.5,329.7 L2195.1,325.2 L2194.9,320.5 L2194.6,315.6 L2194.5,310.5 L2194.3,305.3 L2194.2,300.0 L2194.2,294.8 L2194.2,289.5 L2194.2,284.4 L2194.3,279.4 L2194.4,274.6 L2194.5,270.1 L2194.7,265.7 L2194.9,261.2 L2195.2,256.7 L2195.6,252.2 L2196.0,247.8 L2196.4,243.6 L2196.8,239.6 L2197.3,235.8 L2197.6,232.3 L2198.0,229.2 L2198.3,226.5 L2198.5,224.3 Z" fill="#1c1c1c"/>
<circle cx="2195" cy="224" r="3.5" fill="#1c1c1c"/>
<path d="M2358.0,376.0 C2350.5,377.0 2314.0,379.3 2313.0,382.0 C2312.0,384.7 2351.0,386.5 2352.0,392.0 C2353.0,397.5 2329.3,404.2 2319.0,415.0 C2308.7,425.8 2294.8,450.0 2290.0,457.0" fill="none" stroke="#3a3a3a" stroke-width="3" stroke-linecap="round" stroke-linejoin="round"/>
<path d="M2326.6,428.7 L2325.9,429.4 L2325.1,430.2 L2324.1,431.2 L2322.9,432.3 L2321.7,433.5 L2320.4,434.8 L2319.0,436.2 L2317.6,437.7 L2316.3,439.2 L2315.0,440.9 L2313.8,442.5 L2312.6,444.3 L2311.6,446.0 L2310.7,447.8 L2309.9,449.7 L2309.1,451.7 L2308.4,453.8 L2307.6,455.9 L2307.0,458.0 L2306.3,460.2 L2305.7,462.5 L2305.0,464.8 L2304.4,467.2 L2303.8,469.7 L2303.2,472.3 L2302.5,475.3 L2301.9,478.4 L2301.3,481.7 L2300.7,485.1 L2300.1,488.4 L2299.6,491.6 L2299.1,494.7 L2298.6,497.6 L2298.2,500.1 L2297.8,502.2 L2297.5,503.9 L2298.5,504.1 L2298.9,502.4 L2299.3,500.3 L2299.8,497.8 L2300.4,495.0 L2301.1,491.9 L2301.8,488.7 L2302.5,485.4 L2303.2,482.1 L2304.0,478.9 L2304.7,475.8 L2305.5,472.9 L2306.2,470.3 L2306.9,467.9 L2307.6,465.6 L2308.4,463.3 L2309.1,461.1 L2309.8,459.0 L2310.6,456.9 L2311.4,454.9 L2312.2,452.9 L2313.0,451.1 L2313.8,449.3 L2314.6,447.5 L2315.4,445.7 L2316.2,444.1 L2317.2,442.4 L2318.3,440.7 L2319.4,439.1 L2320.6,437.6 L2321.8,436.1 L2322.9,434.7 L2324.0,433.3 L2325.1,432.1 L2326.0,431.1 L2326.8,430.1 L2327.4,429.3 Z" fill="#444"/>
<path d="M2268.6,455.7 L2267.6,457.1 L2266.5,458.7 L2265.1,460.6 L2263.6,462.7 L2261.9,465.0 L2260.2,467.5 L2258.3,470.1 L2256.4,472.8 L2254.5,475.7 L2252.6,478.5 L2250.7,481.4 L2248.9,484.3 L2247.1,487.3 L2245.2,490.4 L2243.3,493.6 L2241.3,496.9 L2239.3,500.2 L2237.3,503.7 L2235.3,507.2 L2233.4,510.7 L2231.4,514.3 L2229.5,517.9 L2227.6,521.4 L2225.8,525.0 L2224.0,528.7 L2222.2,532.6 L2220.3,536.8 L2218.4,541.0 L2216.6,545.3 L2214.8,549.5 L2213.1,553.5 L2211.5,557.3 L2210.1,560.8 L2208.8,563.9 L2207.7,566.6 L2206.8,568.7 L2213.2,571.3 L2214.1,569.1 L2215.1,566.4 L2216.2,563.2 L2217.5,559.6 L2218.9,555.8 L2220.4,551.7 L2222.0,547.4 L2223.6,543.1 L2225.3,538.9 L2226.9,534.7 L2228.6,530.7 L2230.2,527.0 L2231.8,523.4 L2233.4,519.8 L2235.2,516.2 L2236.9,512.6 L2238.7,509.0 L2240.5,505.4 L2242.4,501.9 L2244.2,498.5 L2246.0,495.1 L2247.7,491.8 L2249.5,488.7 L2251.1,485.7 L2252.8,482.7 L2254.5,479.7 L2256.3,476.8 L2258.1,473.9 L2259.8,471.1 L2261.6,468.4 L2263.2,465.9 L2264.8,463.5 L2266.2,461.3 L2267.5,459.3 L2268.5,457.7 L2269.4,456.3 Z" fill="#2a2a2a"/>
<path d="M2210.0,570.0 C2208.7,576.2 2204.5,582.0 2202.0,607.0 C2199.5,632.0 2195.5,692.5 2195.0,720.0 C2194.5,747.5 2195.0,752.3 2199.0,772.0 C2203.0,791.7 2208.5,815.0 2219.0,838.0 C2229.5,861.0 2245.2,885.0 2262.0,910.0 C2278.8,935.0 2305.0,963.0 2320.0,988.0 C2335.0,1013.0 2347.7,1038.3 2352.0,1060.0 C2356.3,1081.7 2353.7,1105.0 2346.0,1118.0 C2338.3,1131.0 2320.0,1137.0 2306.0,1138.0 C2292.0,1139.0 2273.0,1130.3 2262.0,1124.0 C2251.0,1117.7 2243.7,1104.0 2240.0,1100.0" fill="none" stroke="#1c1c1c" stroke-width="7" stroke-linecap="round" stroke-linejoin="round"/>
<path d="M2240.0,1100.0 C2237.7,1093.3 2227.3,1073.3 2226.0,1060.0 C2224.7,1046.7 2227.2,1031.7 2232.0,1020.0 C2236.8,1008.3 2247.5,996.5 2255.0,990.0 C2262.5,983.5 2273.3,982.5 2277.0,981.0" fill="none" stroke="#3a3a3a" stroke-width="3" stroke-linecap="round" stroke-linejoin="round"/>
<path d="M2358.0,464.0 C2351.5,466.2 2325.2,473.7 2319.0,477.0 C2312.8,480.3 2320.7,482.8 2321.0,484.0" fill="none" stroke="#1c1c1c" stroke-width="6" stroke-linecap="round" stroke-linejoin="round"/>
<path d="M2358.0,494.0 C2355.8,488.7 2349.0,507.3 2345.0,516.0 C2341.0,524.7 2331.8,540.7 2334.0,546.0 C2336.2,551.3 2354.0,556.7 2358.0,548.0 C2362.0,539.3 2360.2,499.3 2358.0,494.0 Z" fill="#000"/>
<path d="M2221.0,539.0 C2224.2,537.8 2249.3,547.5 2260.0,550.0 C2270.7,552.5 2273.3,554.2 2285.0,554.0 C2296.7,553.8 2317.8,550.3 2330.0,549.0 C2342.2,547.7 2353.3,544.0 2358.0,546.0 C2362.7,548.0 2365.2,556.2 2358.0,561.0 C2350.8,565.8 2327.2,572.3 2315.0,575.0 C2302.8,577.7 2294.2,578.2 2285.0,577.0 C2275.8,575.8 2267.3,571.3 2260.0,568.0 C2252.7,564.7 2247.5,561.8 2241.0,557.0 C2234.5,552.2 2217.8,540.2 2221.0,539.0 Z" fill="#000"/>
<path d="M2345.0,582.0 C2347.3,580.5 2355.8,577.5 2358.0,585.0 C2360.2,592.5 2359.7,622.7 2358.0,627.0 C2356.3,631.3 2350.3,616.5 2348.0,611.0 C2345.7,605.5 2344.5,598.8 2344.0,594.0 C2343.5,589.2 2342.7,583.5 2345.0,582.0 Z" fill="#000"/>
<path d="M2351.0,688.0 C2352.0,686.3 2356.8,686.5 2358.0,690.0 C2359.2,693.5 2359.0,707.3 2358.0,709.0 C2357.0,710.7 2353.2,703.5 2352.0,700.0 C2350.8,696.5 2350.0,689.7 2351.0,688.0 Z" fill="#111"/>
<path d="M2300.0,578.0 C2302.0,584.2 2308.2,602.5 2312.0,615.0 C2315.8,627.5 2321.2,646.7 2323.0,653.0" fill="none" stroke="#1c1c1c" stroke-width="5" stroke-linecap="round" stroke-linejoin="round"/>
<path d="M2311.0,578.0 C2313.8,585.5 2325.2,615.5 2328.0,623.0" fill="none" stroke="#3a3a3a" stroke-width="3.5" stroke-linecap="round" stroke-linejoin="round"/>
<path d="M2327.0,620.0 C2327.5,629.3 2329.5,666.7 2330.0,676.0" fill="none" stroke="#1c1c1c" stroke-width="4" stroke-linecap="round" stroke-linejoin="round"/>
<ellipse cx="2329" cy="683" rx="5" ry="4" fill="#222"/>
<path d="M2300.0,522.0 C2300.3,527.5 2301.7,549.5 2302.0,555.0" fill="none" stroke="#3a3a3a" stroke-width="3.5" stroke-linecap="round" stroke-linejoin="round"/>
<path d="M2241.0,1111.0 C2249.2,1116.7 2274.3,1136.8 2290.0,1145.0 C2305.7,1153.2 2323.7,1157.0 2335.0,1160.0 C2346.3,1163.0 2354.2,1162.5 2358.0,1163.0" fill="none" stroke="#3a3a3a" stroke-width="4" stroke-linecap="round" stroke-linejoin="round"/>
<path d="M2306.0,1024.0 C2291.5,1031.3 2249.7,1045.3 2219.0,1068.0 C2188.3,1090.7 2151.7,1126.7 2122.0,1160.0 C2092.3,1193.3 2059.8,1232.0 2041.0,1268.0 C2022.2,1304.0 2015.3,1349.0 2009.0,1376.0 C2002.7,1403.0 2002.7,1417.5 2003.0,1430.0 C2003.3,1442.5 2005.5,1453.7 2011.0,1451.0 C2016.5,1448.3 2022.8,1443.2 2036.0,1414.0 C2049.2,1384.8 2081.0,1299.0 2090.0,1276.0" fill="none" stroke="#3a3a3a" stroke-width="3.5" stroke-linecap="round" stroke-linejoin="round"/>
<path d="M2036.0,1414.0 C2033.3,1425.7 2023.2,1459.2 2020.0,1484.0 C2016.8,1508.8 2017.5,1549.8 2017.0,1563.0" fill="none" stroke="#3a3a3a" stroke-width="4" stroke-linecap="round" stroke-linejoin="round"/>
<path d="M2082.0,1563.0 C2090.7,1534.2 2117.2,1438.0 2134.0,1390.0 C2150.8,1342.0 2174.8,1294.2 2183.0,1275.0" fill="none" stroke="#1c1c1c" stroke-width="6" stroke-linecap="round" stroke-linejoin="round"/>
<path d="M2183.0,1275.0 C2178.7,1291.8 2162.3,1347.2 2157.0,1376.0 C2151.7,1404.8 2148.5,1421.0 2151.0,1448.0 C2153.5,1475.0 2162.7,1528.3 2172.0,1538.0 C2181.3,1547.7 2194.2,1530.5 2207.0,1506.0 C2219.8,1481.5 2241.8,1405.5 2249.0,1391.0 C2256.2,1376.5 2248.8,1404.7 2250.0,1419.0 C2251.2,1433.3 2251.2,1462.5 2256.0,1477.0 C2260.8,1491.5 2266.0,1511.3 2279.0,1506.0 C2292.0,1500.7 2324.8,1455.2 2334.0,1445.0" fill="none" stroke="#3a3a3a" stroke-width="4" stroke-linecap="round" stroke-linejoin="round"/>
<path d="M2357.0,1274.0 C2354.7,1281.2 2345.8,1302.5 2343.0,1317.0 C2340.2,1331.5 2339.0,1345.0 2340.0,1361.0 C2341.0,1377.0 2346.2,1400.8 2349.0,1413.0 C2351.8,1425.2 2355.7,1430.5 2357.0,1434.0" fill="none" stroke="#111" stroke-width="8" stroke-linecap="round" stroke-linejoin="round"/>
<path d="M2325.0,1563.0 C2330.3,1555.5 2351.7,1525.5 2357.0,1518.0" fill="none" stroke="#111" stroke-width="8" stroke-linecap="round" stroke-linejoin="round"/>
<path d="M2358.0,1225.0 C2358.0,1281.3 2358.0,1506.7 2358.0,1563.0" fill="none" stroke="#111" stroke-width="0" stroke-linecap="round" stroke-linejoin="round"/>
</g>
</svg>

<!-- ICONS -->
<svg class="a" style="left:0;top:0;" width="2360" height="1640" viewBox="0 0 2360 1640" fill="none" stroke="#c6c6c6" stroke-width="3" stroke-linecap="round" stroke-linejoin="round">
<g fill="#fff" stroke="none"><path d="M2194,34 L2186.5,26.5 A10.6,10.6 0 0 1 2201.5,26.5 Z"/><path d="M2182.5,22.5 A16.3,16.3 0 0 1 2205.5,22.5 L2203,25 A12.8,12.8 0 0 0 2185,25 Z"/><path d="M2178.5,18.5 A22,22 0 0 1 2209.5,18.5 L2207,21 A18.5,18.5 0 0 0 2181,21 Z"/></g>
<rect x="2278.5" y="13" width="45.5" height="22" rx="7" stroke="#8d8d8d" stroke-width="2.5" fill="none"/>
<rect x="2281.5" y="16" width="8" height="16" rx="3" fill="#34c759" stroke="none"/>
<path d="M2306,11.5 L2292,27 L2299.5,27 L2296,37 L2310,21.5 L2302.5,21.5 Z" fill="#fff" stroke="#4e4e4e" stroke-width="1.5"/>
<path d="M2327.5,20 A4,4 0 0 1 2327.5,28 Z" fill="#8d8d8d" stroke="none"/>
<circle cx="1164" cy="25" r="5" fill="#9a9a9a" stroke="none"/>
<circle cx="1180" cy="25" r="5" fill="#9a9a9a" stroke="none"/>
<circle cx="1196" cy="25" r="5" fill="#9a9a9a" stroke="none"/>
<path d="M43,72 C37,66 41,59 52,58 C62,57 70,61 68,68 C66,74 58,74 52,76 L58,85" stroke="#b4b4b4" stroke-width="7" fill="none"/>
<g stroke="#8a8a8a" stroke-width="2" fill="none"><path d="M14,108 L6,116 L14,124 M22,108 L14,116 L22,124"/><path d="M109,104 V128 M113.5,104 V128 M118,104 V128"/><path d="M140,108 L132,116 L140,124 M148,108 L140,116 L148,124"/><path d="M195,108 L203,116 L195,124"/></g>
<g stroke="#9a9a9a" stroke-width="2"><path d="M18,155 H32 M18,161 H32 M18,167 H32"/></g>
<path d="M88,160 L68,180 L62,186 L70,183 L90,163 Z" fill="#c6c6c6" stroke="#c6c6c6" stroke-width="4"/>
<path d="M105,164 H116 M110.5,164 V178" stroke="#b0b0b0" stroke-width="2" fill="none"/>
<g stroke="#c6c6c6" fill="none"><circle cx="31" cy="216" r="13.5" stroke-width="3"/><path d="M41,226 L51,236" stroke-width="4"/><path d="M80,220 L76,216 C73,213 75,210 78,212 L84,218 L82,206 C81,202 85,202 86,206 L88,214 L88,204 C88,200 92,200 92,204 L93,214 L95,206 C96,202 100,202 99,206 L98,216 L101,210 C102,206 106,207 105,211 L101,226 C99,233 95,236 89,236 C84,236 82,232 80,228 Z" fill="#c6c6c6" stroke="none"/><path d="M18,264 L31,257 L44,264 L44,278 L31,285 L18,278 Z M18,264 L31,270 L44,264 M31,270 V285" stroke-width="2"/><path d="M36,272 L51,284 L44,285 L48,293 L44,294 L40,287 L36,291 Z" fill="#c6c6c6" stroke="none"/><path d="M90,257 V292 M72,274 H108" stroke-width="2.5"/><path d="M90,256 L84,264 H96 Z M90,293 L84,285 H96 Z M71,274 L79,268 V280 Z M109,274 L101,268 V280 Z" fill="#c6c6c6" stroke="none"/><path d="M29,340 C20,334 18,320 30,313 C40,308 52,314 51,324 C50,334 38,338 30,336 C24,335 26,342 32,340 C34,345 26,346 17,346" stroke-width="2.5"/><path d="M73,345 L90,327" stroke-width="2.5"/><path d="M94,309 L97,320 L108,316 L100,324 L108,332 L97,328 L94,339 L91,328 L80,332 L88,324 L80,316 L91,320 Z" fill="#c6c6c6" stroke="none"/><path d="M17,400 L22,388 L38,372 L44,378 L28,394 Z" stroke-width="2.5"/><path d="M36,370 L48,382 M42,370 C44,362 54,364 50,374 L44,378" stroke-width="4"/><path d="M18,399 L22,390 L27,394 Z" fill="#c6c6c6" stroke="none"/><path d="M10,415 H118" stroke="#7a7a7a" stroke-width="2"/><path d="M17,463 L24,440 L40,432 L45,438 L38,455 Z" stroke-width="2.5"/><path d="M40,430 L46,424 L53,431 L47,437 Z" fill="#c6c6c6" stroke="#c6c6c6" stroke-width="2"/><path d="M17,463 L31,447" stroke-width="2"/><path d="M72,464 C72,452 78,444 88,436 L97,445 C90,455 84,462 72,464 Z" fill="#c6c6c6" stroke="none"/><path d="M96,429 L102,423 L108,429 L102,435 Z" fill="#c6c6c6" stroke="#c6c6c6" stroke-width="2"/></g>
<rect x="8.5" y="475.5" width="50" height="50" fill="#646b88" stroke="#2a2a2a" stroke-width="1.5"/>
<path d="M17,520 L24,500 L40,487 L50,497 L37,512 Z" stroke="#c6c6c6" stroke-width="2.5" fill="none"/><path d="M40,487 L46,481 L56,491 L50,497 Z" fill="#c6c6c6" stroke="none"/><path d="M34,496 L42,504 L36,500 Z" fill="#c6c6c6"/>
<g stroke="#c6c6c6" fill="none"><g fill="#c6c6c6" stroke="none"><circle cx="73" cy="482" r="1.6"/><circle cx="78" cy="484" r="1.6"/><circle cx="83" cy="486" r="1.6"/><circle cx="73" cy="488" r="1.6"/><circle cx="78" cy="490" r="1.6"/><circle cx="88" cy="490" r="1.6"/><circle cx="73" cy="494" r="1.6"/><circle cx="78" cy="496" r="1.6"/><circle cx="83" cy="492" r="1.6"/><circle cx="73" cy="500" r="1.6"/><circle cx="78" cy="502" r="1.6"/><circle cx="83" cy="498" r="1.6"/></g><path d="M84,517 V505 C84,498 90,496 96,496 C102,496 108,498 108,505 V517 Z" fill="#c6c6c6" stroke="none"/><rect x="86" y="508" width="20" height="7" fill="#3e3e3e" stroke="none"/><rect x="93" y="487" width="6" height="9" rx="2" fill="#c6c6c6" stroke="none"/><path d="M31,536 L34,548 L46,551 L34,554 L31,566 L28,554 L16,551 L28,548 Z M45,558 L46.5,563 L52,564.5 L46.5,566 L45,572 L43.5,566 L38,564.5 L43.5,563 Z" fill="#c6c6c6" stroke="none"/><path d="M92,536 L108,552 L94,566 L78,550 Z" fill="#c6c6c6" stroke="none"/><path d="M78,550 L72,556 L83,567 L94,566" stroke-width="2.5"/><path d="M86,570 H106" stroke-width="2.5"/><defs><linearGradient id="gd" x1="0" y1="0" x2="1" y2="1"><stop offset="0" stop-color="#d0d0d0"/><stop offset="1" stop-color="#555"/></linearGradient></defs><path d="M25,592 C20,602 16,608 16,614 C16,620 20,624 25,624 C28,624 31,622 33,620 C35,622 38,624 41,624 C46,624 51,620 51,614 C51,608 46,602 41,592 C38,600 35,604 33,608 C31,604 28,600 25,592 Z" fill="url(#gd)" stroke="#c6c6c6" stroke-width="2"/><path d="M10,640.5 H118" stroke="#7a7a7a" stroke-width="2"/><path d="M34,656 L52,673 L36,689 L20,673 Z" fill="#c6c6c6" stroke="#c6c6c6" stroke-width="2"/><path d="M20,673 C14,675 14,684 18,684 C22,684 22,676 22,676" fill="#c6c6c6" stroke="#c6c6c6" stroke-width="2"/><path d="M25,667 L34,659 L43,667 Z" fill="#3e3e3e" stroke="none"/><defs><linearGradient id="gg" x1="0" y1="0" x2="1" y2="1"><stop offset="0" stop-color="#d6d6d6"/><stop offset="1" stop-color="#4a4a4a"/></linearGradient></defs><rect x="75" y="657" width="31" height="31" rx="4" fill="url(#gg)" stroke="#c6c6c6" stroke-width="2"/><path d="M17,743 L51,708" stroke-width="2.5"/><rect x="75" y="711" width="31" height="31" rx="4" stroke-width="2.5"/><path d="M75,722 H106 M75,732 H89 M92,722 L89,742" stroke-width="2.5"/><path d="M18,763 H52 L18,798 Z" fill="#c6c6c6" stroke="none"/><path d="M25,770 H38 L25,784 Z" fill="#3e3e3e" stroke="none"/><path d="M75,798 L89,762 L91,762 L105,798 M80,785 H100" stroke-width="4.5" stroke-linecap="butt" stroke-linejoin="miter"/><path d="M34,818 C44,818 51,823 51,830 C51,837 44,842 34,842 C31,842 29,842 27,841 L19,849 L22,840 C17,838 16,834 16,830 C16,823 24,818 34,818 Z" stroke-width="2.5"/><rect x="72" y="816" width="10" height="9" fill="#c6c6c6" stroke="none"/><path d="M77,825 V851 M82,820 H106" stroke-width="2.5"/><path d="M87,830 L107,838 L98,841 L93,852 Z" fill="#c6c6c6" stroke="none"/></g>
<g stroke="#c6c6c6" fill="none"><circle cx="170" cy="177" r="15.5" stroke-width="3"/><path d="M162,170 L174,170 L170,174 L188,193 L181,193 L167,178 L162,183 Z" fill="#c6c6c6" stroke="none"/><path d="M152.5,280 L166,252 M152.5,280 L171.5,270" stroke-width="2.5"/><path d="M165,252 L177,243 L189,255 L181,262 C179,258 176,260 174,260 C171,260 169,256 165,252 Z" fill="#c6c6c6" stroke="none"/><path d="M189,265 H175 V280.5 H189 M175,273 H189" stroke-width="2.5"/><circle cx="189" cy="265" r="3.2" fill="#c6c6c6" stroke="none"/><circle cx="189" cy="273" r="3.2" fill="#c6c6c6" stroke="none"/><circle cx="189" cy="280.5" r="3.2" fill="#c6c6c6" stroke="none"/><path d="M152.5,348 L166,320 M152.5,348 L171.5,338" stroke-width="2.5"/><path d="M165,320 L177,311 L189,323 L181,330 C179,326 176,328 174,328 C171,328 169,324 165,320 Z" fill="#c6c6c6" stroke="none"/><circle cx="181" cy="341" r="6.5" stroke-width="4"/><path d="M181,329 V333 M181,349 V353 M169,341 H173 M189,341 H193 M172.5,332.5 L175,335 M187,347 L189.5,349.5 M189.5,332.5 L187,335 M175,347 L172.5,349.5" stroke-width="3"/><path d="M152.5,416 L166,388 M152.5,416 L171.5,406" stroke-width="2.5"/><path d="M165,388 L177,379 L189,391 L181,398 C179,394 176,396 174,396 C171,396 169,392 165,388 Z" fill="#c6c6c6" stroke="none"/><circle cx="181" cy="409" r="10" stroke-width="2.5"/><circle cx="181" cy="409" r="5" stroke-width="2.5"/><circle cx="181" cy="409" r="1.3" fill="#c6c6c6" stroke="none"/><defs><linearGradient id="gs" x1="0" y1="0" x2="1" y2="1"><stop offset="0" stop-color="#d0d0d0"/><stop offset="1" stop-color="#444"/></linearGradient></defs><circle cx="170" cy="482" r="17" stroke-width="2.5"/><rect x="161" y="473" width="18" height="18" rx="3" fill="url(#gs)" stroke="#c6c6c6" stroke-width="2"/><rect x="155" y="535" width="30" height="30" rx="4" fill="#c6c6c6" stroke="none"/><rect x="158" y="538" width="8" height="8" fill="#3a3a3a" stroke="none"/><rect x="174" y="538" width="8" height="8" fill="#888" stroke="none"/><rect x="158" y="546" width="8" height="8" fill="#888" stroke="none"/><rect x="167" y="547" width="6" height="6" fill="#3a3a3a" stroke="none"/><rect x="174" y="546" width="8" height="8" fill="#888" stroke="none"/><rect x="166" y="554" width="8" height="8" fill="#888" stroke="none"/><rect x="174" y="554" width="8" height="8" fill="#3a3a3a" stroke="none"/><rect x="155" y="603" width="30" height="30" rx="4" fill="#c6c6c6" stroke="none"/><rect x="162" y="607" width="16" height="8" fill="#777" stroke="none"/><rect x="162" y="621" width="16" height="8" fill="#777" stroke="none"/><rect x="157.5" y="606" width="3" height="3" fill="#3a3a3a" stroke="none"/><rect x="179.5" y="606" width="3" height="3" fill="#3a3a3a" stroke="none"/><rect x="157.5" y="613" width="3" height="3" fill="#3a3a3a" stroke="none"/><rect x="179.5" y="613" width="3" height="3" fill="#3a3a3a" stroke="none"/><rect x="157.5" y="620" width="3" height="3" fill="#3a3a3a" stroke="none"/><rect x="179.5" y="620" width="3" height="3" fill="#3a3a3a" stroke="none"/><rect x="157.5" y="627" width="3" height="3" fill="#3a3a3a" stroke="none"/><rect x="179.5" y="627" width="3" height="3" fill="#3a3a3a" stroke="none"/><path d="M170,686 L185,695 L170,704 L155,695 Z M155,702 L170,711 L185,702 M155,709 L170,718 L185,709" stroke-width="2.5"/></g>
<rect x="53.5" y="913.5" width="69" height="69" rx="8" fill="#424242" stroke="#6a6a6a" stroke-width="2"/>
<rect x="59" y="919" width="59" height="59" rx="3" fill="#ff7893" stroke="none"/>
<rect x="6" y="869" width="65" height="66" rx="7" fill="#000" stroke="#7d8cc0" stroke-width="4"/>
<rect x="4" y="987.5" width="118.5" height="39" rx="8" fill="#424242" stroke="#6a6a6a" stroke-width="2"/>
<defs><clipPath id="chkc"><rect x="9" y="993" width="108" height="28" rx="3"/></clipPath></defs>
<g clip-path="url(#chkc)" stroke="none"><rect x="9" y="993" width="108" height="28" fill="#fff"/><rect x="3" y="997" width="10" height="10" fill="#808080"/><rect x="3" y="1017" width="10" height="10" fill="#808080"/><rect x="13" y="987" width="10" height="10" fill="#808080"/><rect x="13" y="1007" width="10" height="10" fill="#808080"/><rect x="23" y="997" width="10" height="10" fill="#808080"/><rect x="23" y="1017" width="10" height="10" fill="#808080"/><rect x="33" y="987" width="10" height="10" fill="#808080"/><rect x="33" y="1007" width="10" height="10" fill="#808080"/><rect x="43" y="997" width="10" height="10" fill="#808080"/><rect x="43" y="1017" width="10" height="10" fill="#808080"/><rect x="53" y="987" width="10" height="10" fill="#808080"/><rect x="53" y="1007" width="10" height="10" fill="#808080"/><rect x="63" y="997" width="10" height="10" fill="#808080"/><rect x="63" y="1017" width="10" height="10" fill="#808080"/><rect x="73" y="987" width="10" height="10" fill="#808080"/><rect x="73" y="1007" width="10" height="10" fill="#808080"/><rect x="83" y="997" width="10" height="10" fill="#808080"/><rect x="83" y="1017" width="10" height="10" fill="#808080"/><rect x="93" y="987" width="10" height="10" fill="#808080"/><rect x="93" y="1007" width="10" height="10" fill="#808080"/><rect x="103" y="997" width="10" height="10" fill="#808080"/><rect x="103" y="1017" width="10" height="10" fill="#808080"/><rect x="113" y="987" width="10" height="10" fill="#808080"/><rect x="113" y="1007" width="10" height="10" fill="#808080"/></g>
<g stroke="#c6c6c6" fill="none"><path d="M244,118 H272 M244,128 H272 M244,138 H272" stroke-width="4.5" stroke-linecap="butt"/><rect x="325" y="118.5" width="30" height="26" rx="2" stroke-width="2.5"/><path d="M334,140 C326,136 330,128 336,131" stroke-width="2.5"/><path d="M336,134 L350,118 C352,113 358,110 361,111 C362,115 360,121 355,123 L340,138 Z" fill="#c6c6c6" stroke="#646b88" stroke-width="1.5"/><path d="M393,124 L404,112 L415,124 M393,132 L404,144 L415,132" stroke-width="2.5"/><rect x="449" y="111" width="34" height="34" rx="3" stroke-width="2.5"/><path d="M456,134 C452,126 462,118 470,120 C476,122 474,130 466,132 C460,133 460,126 466,125" stroke-width="3"/><circle cx="478" cy="115.5" r="5.5" fill="#c8213f" stroke="none"/><path d="M517,100 V157" stroke="#8c8c8c" stroke-width="1.5"/><path d="M573,141 H558 C556,141 555,140 555,138 V113 C555,111 556,110 558,110 H577 C579,110 580,111 580,113 V134" stroke-width="2.5"/><path d="M555,138 L566,149 V141 H557 Z" fill="#c6c6c6" stroke="none"/><circle cx="578" cy="141" r="9.5" fill="#c6c6c6" stroke="none"/><path d="M578,135 V147 M572,141 H584" stroke="#4d4d4d" stroke-width="2.5"/><path d="M645,144 H636 C635,144 634,143 634,142 V113 C634,112 635,112 636,112 H648 L652,116 H656" stroke-width="2.5"/><path d="M638,144 L645,126 H670 L663,144 Z" fill="#c6c6c6" stroke="none"/><path d="M660,127 C660,120 664,116 670,116" stroke-width="2.5"/><path d="M668,111 L676,116 L668,121 Z" fill="#c6c6c6" stroke="#c6c6c6" stroke-width="1.5"/><path d="M734,111 V128" stroke-width="2.5"/><path d="M728,125 L734,132 L740,125 Z" fill="#c6c6c6" stroke="#c6c6c6" stroke-width="1.5"/><path d="M726,118 H722 L717,136 V142 H753 V136 L748,118 H742" stroke-width="2.5"/><rect x="719" y="135" width="32" height="7" fill="#8a8a8a" stroke="none"/><path d="M786,124 L797,112 L808,124 M786,132 L797,144 L808,132" stroke-width="2.5"/><path d="M825,100 V157" stroke="#8c8c8c" stroke-width="1.5"/><path d="M864,121 H875 C883,121 888,126 888,132 C888,138 883,142 875,142 H858" stroke-width="2.5"/><path d="M857,120 L867,111 V129 Z" fill="#c6c6c6" stroke="#c6c6c6" stroke-width="1.5"/><path d="M964,121 H953 C945,121 941,126 941,132 C941,138 945,142 953,142 H970" stroke-width="2.5"/><path d="M973,120 L963,111 V129 Z" fill="#c6c6c6" stroke="#c6c6c6" stroke-width="1.5"/><path d="M1009,100 V157" stroke="#8c8c8c" stroke-width="1.5"/><path d="M1067.7,130.6 L1074.4,132.4 M1065.1,135.1 L1070.0,140.0 M1060.6,137.7 L1062.4,144.4 M1055.4,137.7 L1053.6,144.4 M1050.9,135.1 L1046.0,140.0 M1048.3,130.6 L1041.6,132.4 M1048.3,125.4 L1041.6,123.6 M1050.9,120.9 L1046.0,116.0 M1055.4,118.3 L1053.6,111.6 M1060.6,118.3 L1062.4,111.6 M1065.1,120.9 L1070.0,116.0 M1067.7,125.4 L1074.4,123.6 " stroke-width="3"/><rect x="1127" y="112" width="23" height="23" stroke-width="2.5" stroke-dasharray="4 3" stroke="#9a9a9a"/><path d="M1153.5,134.3 L1157.2,132.8 M1153.8,138.6 L1157.7,139.6 M1151.5,142.3 L1154.1,145.4 M1147.5,144.0 L1147.9,148.0 M1143.3,143.0 L1141.3,146.4 M1140.5,139.7 L1136.8,141.2 " stroke-width="2" stroke="#9a9a9a"/><path d="M1226,112 L1245,131 L1228,146 L1210,129 Z" fill="#c6c6c6" stroke="#c6c6c6" stroke-width="2"/><path d="M1210,129 C1204,132 1205,140 1209,140 C1213,140 1213,134 1213,134" fill="#c6c6c6" stroke="#c6c6c6" stroke-width="3"/><path d="M1217,122 L1226,114 L1235,122 Z" fill="#4d4d4d" stroke="none"/><rect x="1297" y="118" width="26" height="25" stroke-width="2.5"/><path d="M1310,111 V118" stroke-width="2.5"/><circle cx="1310" cy="111" r="3" fill="#c6c6c6" stroke="none"/><circle cx="1297" cy="118" r="3" fill="#c6c6c6" stroke="none"/><circle cx="1310" cy="118" r="3" fill="#c6c6c6" stroke="none"/><circle cx="1323" cy="118" r="3" fill="#c6c6c6" stroke="none"/><circle cx="1297" cy="131" r="3" fill="#c6c6c6" stroke="none"/><circle cx="1323" cy="131" r="3" fill="#c6c6c6" stroke="none"/><circle cx="1297" cy="143" r="3" fill="#c6c6c6" stroke="none"/><circle cx="1310" cy="143" r="3" fill="#c6c6c6" stroke="none"/><circle cx="1323" cy="143" r="3" fill="#c6c6c6" stroke="none"/><path d="M1361,100 V157" stroke="#8c8c8c" stroke-width="1.5"/><rect x="1394" y="112" width="31" height="31" stroke="#8c8c8c" stroke-width="2.5" stroke-dasharray="4 3.5"/><path d="M1393,111 L1427,145" stroke="#8c8c8c" stroke-width="2.5"/><rect x="1478" y="112" width="31" height="31" stroke="#8c8c8c" stroke-width="2.5" stroke-dasharray="4 3.5"/><path d="M1509,112 L1509,143 L1478,143 Z" fill="#717171" stroke="none"/><path d="M1478,143 L1509,112" stroke="#4d4d4d" stroke-width="2"/><rect x="1563" y="112" width="31" height="32" rx="5" stroke="#8c8c8c" stroke-width="2.5"/><rect x="1568" y="117" width="21" height="22" stroke="#8c8c8c" stroke-width="2.5" stroke-dasharray="4 3"/><path d="M1629,100 V157" stroke="#8c8c8c" stroke-width="1.5"/><path d="M1662,144 V114 L1689,144 Z" stroke="#c6c6c6" stroke-width="2.5"/><path d="M1676,128 L1693,110 C1695,108 1698,109 1698,112 L1681,131 L1675,133 Z" fill="#c6c6c6" stroke="#646b88" stroke-width="1.2"/><path d="M1745,128 H1779 C1779,138 1771,145 1762,145 C1753,145 1745,138 1745,128 Z" stroke="#c6c6c6" stroke-width="2.5"/><path d="M1759,125 L1776,110 C1778,108 1781,109 1781,112 L1764,128 L1757,130 Z" fill="#c6c6c6" stroke="#646b88" stroke-width="1.2"/><path d="M1828,129 H1864 M1828,141 H1864 M1835,116 V147 M1854,116 V147" stroke="#777" stroke-width="1.5"/><path d="M1835,129 V141 H1864" stroke="#c6c6c6" stroke-width="2.5"/><path d="M1846,126 L1862,110 C1864,108 1867,109 1867,112 L1851,129 L1845,131 Z" fill="#c6c6c6" stroke="#4d4d4d" stroke-width="1.2"/><path d="M1897,100 V157" stroke="#8c8c8c" stroke-width="1.5"/><rect x="1934" y="109" width="25" height="38" rx="3" stroke-width="2.5"/><path d="M1934,141 V144 C1934,146 1936,147 1937,147 H1956 C1958,147 1959,146 1959,144 V141 Z" fill="#c6c6c6" stroke="none"/><rect x="1934" y="141" width="25" height="6" fill="#c6c6c6" stroke="none"/><rect x="1938" y="113" width="4" height="4" fill="#c6c6c6" stroke="none"/><rect x="1944" y="113" width="4" height="4" fill="#c6c6c6" stroke="none"/><rect x="1950" y="113" width="4" height="4" fill="#c6c6c6" stroke="none"/><rect x="1938" y="119" width="4" height="4" fill="#c6c6c6" stroke="none"/><rect x="1944" y="119" width="4" height="4" fill="#c6c6c6" stroke="none"/><rect x="1938" y="125" width="4" height="4" fill="#c6c6c6" stroke="none"/><rect x="1944" y="125" width="4" height="4" fill="#c6c6c6" stroke="none"/><rect x="1950" y="125" width="4" height="4" fill="#c6c6c6" stroke="none"/><rect x="1938" y="131" width="4" height="4" fill="#c6c6c6" stroke="none"/><path d="M1997,100 V157" stroke="#8c8c8c" stroke-width="1.5"/><path d="M2058,128 C2058,138 2050,145 2044,145 C2040,145 2038,144 2036,143 L2030,146 L2033,139 C2031,136 2031,132 2031,128 C2031,119 2037,112 2045,112 C2050,112 2054,114 2056,117" stroke-width="2.5"/><path d="M2040,124 C2040,120 2043,118 2046,118 C2049,118 2051,120 2051,123 C2051,127 2046,127 2046,132" stroke-width="3"/><circle cx="2046" cy="137" r="2" fill="#c6c6c6" stroke="none"/><path d="M2052,120 L2063,110 M2056,110 H2063 V117" stroke-width="2"/><path d="M2322,173 L2333.5,184 L2345,173" stroke="#c6c6c6" stroke-width="2.5"/></g>
</svg>
</body></html>
